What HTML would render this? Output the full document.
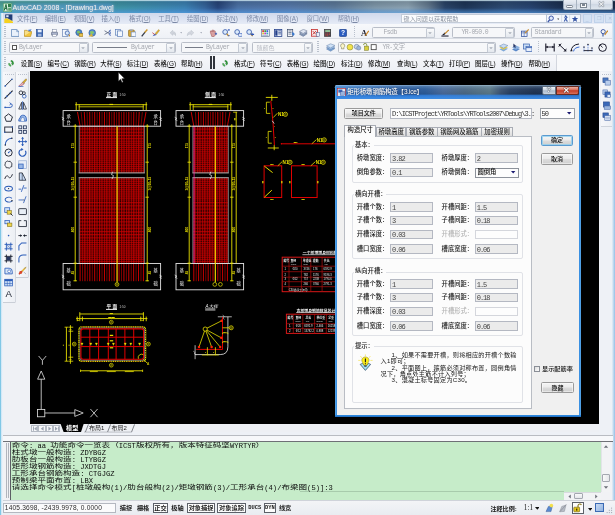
<!DOCTYPE html>
<html lang="zh-CN"><head><meta charset="utf-8"><title>AutoCAD 2008 - [Drawing1.dwg]</title>
<style>
html,body{margin:0;padding:0;background:#fff;}
#app{filter:blur(0.36px);position:relative;width:615px;height:515px;overflow:hidden;background:#eef1f6;font-family:"Liberation Sans","Noto Sans CJK SC",sans-serif;font-size:5.8px;}
#app div,#app span.t,#app svg{position:absolute;box-sizing:border-box;}
#app span.t{white-space:nowrap;display:block;}
#app u{text-decoration-thickness:0.6px;text-underline-offset:0.6px;}
.cb{background:#f6f7f9;border:1px solid #b9bec8;border-radius:1.5px;}
.fld{background:#ebebeb;border:1px solid #b4b4b4;}
.btn{background:linear-gradient(#f4f4f4,#e6e6e6 50%,#d4d4d4);border:1px solid #8e8e8e;border-radius:1.5px;}
.grp{border:1px solid #e0e2e7;border-radius:2px;}
#app span.cj{font-size:8.56px;line-height:8.56px;font-family:'Liberation Sans','Noto Sans CJK SC',sans-serif;transform:scaleY(0.70);transform-origin:0 0;color:#0c0c0c;}
#app span.la{font-size:7.133px;line-height:6.93px;font-family:'Liberation Mono',monospace;white-space:pre;color:#0a0a0a;}
</style></head><body>
<div id="app">
<!-- sec_chrome -->
<div style="left:0px;top:0px;width:615px;height:13.2px;background:linear-gradient(90deg,#4fa59c 0px,#46a096 60px,#3f93a6 120px,#3c82b4 185px,#35649a 205px,#27457a 218px,#4c72a6 238px,#5679aa 290px,#5c7a9a 335px,#7f98aa 375px,#8ba2b2 408px,#63798f 428px,#2a4468 445px,#1e3658 465px,#2e4c74 505px,#284470 530px,#1c3152 560px,#192b48 615px);"></div>
<div style="left:0px;top:0px;width:615px;height:13.2px;background:linear-gradient(180deg,rgba(205,228,236,.8) 0,rgba(205,228,236,.75) 0.9px,rgba(0,0,0,.14) 1.6px,rgba(0,0,0,.08) 5px,rgba(0,0,0,0) 8px,rgba(80,150,225,.4) 11px,rgba(90,165,235,.6) 13.2px);"></div>
<svg style="left:2.5px;top:2.5px" width="9" height="9" viewBox="0 0 9 9"><rect width="9" height="9" rx="1" fill="#3f8f5a"/><rect x="0.6" y="0.6" width="7.8" height="7.8" fill="#d8efe0"/><path d="M1.2 7.6 L3 1.4 L4.2 7.6 M1.8 5.4 H3.8" stroke="#1f6b3c" stroke-width="1" fill="none"/><rect x="5" y="1" width="3" height="3.2" fill="#2f7f4a"/><rect x="5.2" y="5" width="2.8" height="2.8" fill="#5aa070"/></svg>
<div style="left:13px;top:2.6px;width:100px;height:8.6px;background:rgba(86,146,222,.55);filter:blur(2.2px);border-radius:4px;"></div>
<span class="t" style="left:12.6px;top:3.5px;font-size:7px;line-height:7px;color:#f4f8fb;text-shadow:0 0 2px rgba(255,255,255,.75),0 0 1px rgba(30,60,90,.8);">AutoCAD 2008 - [Drawing1.dwg]</span>
<div style="left:562.5px;top:0px;width:50px;height:9.8px;background:linear-gradient(#e9eef4,#d9e0ea 45%,#cfd8e4 50%,#dfe6ee);border:1px solid #9aa8b8;border-top:none;border-radius:0 0 2.5px 2.5px;"></div>
<div style="left:576.4px;top:0px;width:1px;height:9.2px;background:#a8b4c2;"></div>
<div style="left:590.4px;top:0px;width:1px;height:9.2px;background:#a8b4c2;"></div>
<div style="left:566px;top:4.6px;width:7px;height:3px;border:0.8px solid #7c8692;border-radius:1.2px;background:#fafbfc;"></div>
<div style="left:580.4px;top:2.6px;width:6.6px;height:5px;border:0.8px solid #7c8692;background:#fafbfc;"></div>
<div style="left:582px;top:4.2px;width:3.4px;height:2px;border:0.6px solid #7c8692;"></div>
<span class="t" style="left:597.6px;top:0.9px;font-size:7.6px;line-height:7.6px;color:#f4f6f8;font-weight:bold;text-shadow:0 0 0.8px #5c6672,0 0 0.8px #5c6672,0 0 1px #5c6672;">✕</span>
<div style="left:0px;top:13.2px;width:615px;height:10.8px;background:linear-gradient(180deg,#d0d9ec,#dbe2f1 50%,#e6ebf6);"></div>
<svg style="left:3.6px;top:14.2px" width="9.4" height="9.4" viewBox="0 0 9.4 9.4"><path d="M1.2 0.4 H8.4 V7 H1.2 Z" fill="#213d78"/><path d="M2.2 1.2 H4.6 V3.2 H2.2Z" fill="#dfe7f5"/><path d="M0.3 9.1 V5 L3 4.3 L9 7.6 V9.1 Z" fill="#f5d11e"/><path d="M0.3 5 L3 4.3 L9 7.6" stroke="#fff3a0" stroke-width="0.5" fill="none"/></svg>
<span class="t" style="left:17px;top:15.8px;font-size:6.3px;line-height:6.3px;color:#7c89a6;">文件(<u>F</u>)</span>
<span class="t" style="left:44.8px;top:15.8px;font-size:6.3px;line-height:6.3px;color:#7c89a6;">编辑(<u>E</u>)</span>
<span class="t" style="left:73.7px;top:15.8px;font-size:6.3px;line-height:6.3px;color:#7c89a6;">视图(<u>V</u>)</span>
<span class="t" style="left:101.6px;top:15.8px;font-size:6.3px;line-height:6.3px;color:#7c89a6;">插入(<u>I</u>)</span>
<span class="t" style="left:129px;top:15.8px;font-size:6.3px;line-height:6.3px;color:#7c89a6;">格式(<u>O</u>)</span>
<span class="t" style="left:158.3px;top:15.8px;font-size:6.3px;line-height:6.3px;color:#7c89a6;">工具(<u>T</u>)</span>
<span class="t" style="left:187px;top:15.8px;font-size:6.3px;line-height:6.3px;color:#7c89a6;">绘图(<u>D</u>)</span>
<span class="t" style="left:216.4px;top:15.8px;font-size:6.3px;line-height:6.3px;color:#7c89a6;">标注(<u>N</u>)</span>
<span class="t" style="left:246.4px;top:15.8px;font-size:6.3px;line-height:6.3px;color:#7c89a6;">修改(<u>M</u>)</span>
<span class="t" style="left:277px;top:15.8px;font-size:6.3px;line-height:6.3px;color:#7c89a6;">图像(<u>A</u>)</span>
<span class="t" style="left:306.5px;top:15.8px;font-size:6.3px;line-height:6.3px;color:#7c89a6;">窗口(<u>W</u>)</span>
<span class="t" style="left:337.8px;top:15.8px;font-size:6.3px;line-height:6.3px;color:#7c89a6;">帮助(<u>H</u>)</span>
<div style="left:401px;top:14px;width:144.5px;height:8.8px;background:#fbfcfe;border:1px solid #c4ccd8;border-right:none;"></div>
<span class="t" style="left:403.6px;top:15.6px;font-size:6.1px;line-height:6.1px;color:#8c94a2;">键入问题以获取帮助</span>
<div style="left:545.5px;top:14px;width:35px;height:9.2px;background:#f4f7fc;border:1px solid #b8c4d6;"></div>
<svg style="left:546.5px;top:14.6px" width="33" height="8" viewBox="0 0 33 8"><circle cx="4.2" cy="3.2" r="2.2" fill="#dfe9fb" stroke="#3d57a8" stroke-width="1"/><path d="M2.6 5 L0.8 7" stroke="#3d57a8" stroke-width="1.3"/><path d="M10.2 3.6 h2 l-1 1.3z" fill="#333"/><path d="M14.6 0.3 V7.7 M22.6 0.3 V7.7" stroke="#c2ccdc" stroke-width="0.6"/><path d="M18.4 1 l1.6 1.4 l-1.2 1.6 l1.6 2.6 M17.4 2.4 l1.4 1.2 l-1.6 3" stroke="#3f5fae" stroke-width="1.1" fill="none"/><circle cx="18.6" cy="1.2" r="0.9" fill="#3f5fae"/><path d="M28 0.8 l0.9 2.2 l2.3 0.1 l-1.8 1.5 l0.7 2.3 l-2.1 -1.3 l-2.1 1.3 l0.7 -2.3 l-1.8 -1.5 l2.3 -0.1z" fill="#2f4fa2"/></svg>
<div style="left:582.7px;top:14.2px;width:9.8px;height:8.8px;background:#d3e1f3;border:1px solid #c0d2ea;"></div>
<div style="left:594px;top:14.2px;width:9.8px;height:8.8px;background:#d3e1f3;border:1px solid #c0d2ea;"></div>
<div style="left:605.2px;top:14.2px;width:9.8px;height:8.8px;background:#d3e1f3;border:1px solid #c0d2ea;"></div>
<span class="t" style="left:585.8px;top:16.6px;font-size:5px;line-height:5px;color:#aebfd8;">_</span>
<span class="t" style="left:596.8px;top:16px;font-size:5px;line-height:5px;color:#aebfd8;">❐</span>
<span class="t" style="left:607.6px;top:16px;font-size:5px;line-height:5px;color:#aebfd8;">✕</span>
<!-- sec_tool -->
<div style="left:0px;top:24px;width:615px;height:14.6px;background:linear-gradient(#f7f8fb,#eef1f6);"></div>
<div style="left:0px;top:38.4px;width:615px;height:0.8px;background:#d9dde4;"></div>
<div style="left:0px;top:39.2px;width:615px;height:15.2px;background:linear-gradient(#f6f7fa,#eef1f6);"></div>
<div style="left:0px;top:54.2px;width:615px;height:0.8px;background:#d9dde4;"></div>
<div style="left:0px;top:55px;width:615px;height:15.8px;background:linear-gradient(#f7f8fb,#edf0f5);"></div>
<div style="left:4.4px;top:26px;width:1.6px;height:11px;background:repeating-linear-gradient(180deg,#b9c0cc 0 1px,transparent 1px 2px);"></div>
<div style="left:4.4px;top:41px;width:1.6px;height:12px;background:repeating-linear-gradient(180deg,#b9c0cc 0 1px,transparent 1px 2px);"></div>
<div style="left:4.4px;top:57px;width:1.6px;height:12px;background:repeating-linear-gradient(180deg,#b9c0cc 0 1px,transparent 1px 2px);"></div>
<div style="left:353.6px;top:26px;width:1.6px;height:11px;background:repeating-linear-gradient(180deg,#b9c0cc 0 1px,transparent 1px 2px);"></div>
<div style="left:317px;top:41px;width:1.6px;height:12px;background:repeating-linear-gradient(180deg,#b9c0cc 0 1px,transparent 1px 2px);"></div>
<div style="left:537.5px;top:41px;width:1.6px;height:12px;background:repeating-linear-gradient(180deg,#b9c0cc 0 1px,transparent 1px 2px);"></div>
<svg style="left:10.57px;top:29.04px" width="8.36" height="7.92" viewBox="0 0 9.5 9"><path d="M0.5 0.5 H6.5 L9 3 V8.5 H0.5Z" fill="#e9f1fb" stroke="#5f86b8" stroke-width="0.9"/><path d="M6.5 0.5 V3 H9" fill="none" stroke="#5f86b8" stroke-width="0.7"/></svg>
<svg style="left:23.57px;top:29.04px" width="8.36" height="7.92" viewBox="0 0 9.5 9"><path d="M0.5 8.5 L2 3 H9 L7.5 8.5Z" fill="#f3c63a" stroke="#b58a1a" stroke-width="0.7"/><path d="M0.5 8 V1.5 H3.5 L4.5 2.6 H7.5 V3" fill="#f8df8a" stroke="#b58a1a" stroke-width="0.7"/><path d="M4 1 L8.6 0.4 L7 3.2" fill="#4f7fd0"/></svg>
<svg style="left:35.5px;top:29.04px" width="7.39" height="7.92" viewBox="0 0 8.4 9"><rect x="0.5" y="0.5" width="7.4" height="8" fill="#3b67b4" stroke="#274a8a" stroke-width="0.7"/><rect x="2" y="0.8" width="4.4" height="3" fill="#e6eefa"/><rect x="2.2" y="5.4" width="4" height="3" fill="#9fb6de"/></svg>
<svg style="left:51.28px;top:29.04px" width="7.04" height="7.92" viewBox="0 0 8 9"><rect x="1.6" y="0.6" width="4.6" height="3.4" fill="#fff" stroke="#7b86a0" stroke-width="0.6"/><rect x="0.5" y="3.6" width="7" height="3.6" rx="0.8" fill="#aab4cc" stroke="#55607a" stroke-width="0.7"/><rect x="1.8" y="6" width="4.4" height="2.6" fill="#fff" stroke="#7b86a0" stroke-width="0.6"/></svg>
<svg style="left:61.6px;top:29.04px" width="8.8" height="7.92" viewBox="0 0 10 9"><rect x="0.5" y="0.5" width="6.4" height="8" fill="#f2f6fc" stroke="#6a84b4" stroke-width="0.8"/><circle cx="6" cy="4.6" r="2.4" fill="#d5e6fb" stroke="#3c5fa8" stroke-width="0.9"/><path d="M7.8 6.4 L9.6 8.6" stroke="#c08a2a" stroke-width="1.3"/></svg>
<svg style="left:74.56px;top:29.04px" width="8.27" height="7.92" viewBox="0 0 9.4 9"><circle cx="4.4" cy="4" r="3.5" fill="#4e86c8" stroke="#2c5a9a" stroke-width="0.7"/><path d="M2 3 q2 -2 4 0 q-1 3 -3 2z" fill="#7cc06a"/><rect x="4.6" y="5" width="4.4" height="3.6" fill="#e8c24a" stroke="#8a6a1a" stroke-width="0.6"/></svg>
<svg style="left:87.56px;top:29.04px" width="8.27" height="7.92" viewBox="0 0 9.4 9"><circle cx="4.8" cy="4.4" r="3.8" fill="#5a8fd0" stroke="#2c5a9a" stroke-width="0.7"/><path d="M2 3.4 q2.6 -2.4 5 0.4 q-1.4 3 -3.6 2.4z" fill="#86c86a"/><path d="M0.6 8.4 L4 5.2 L6 8.6Z" fill="#d9b23a"/></svg>
<svg style="left:103.53px;top:29.04px" width="7.74" height="7.92" viewBox="0 0 8.8 9"><path d="M0.6 2 L6.4 5.4 M0.6 6.2 L6.4 3" stroke="#555f78" stroke-width="0.9" fill="none"/><circle cx="7.2" cy="2.6" r="1.2" fill="none" stroke="#3a5db0" stroke-width="0.9"/><circle cx="7.2" cy="6" r="1.2" fill="none" stroke="#3a5db0" stroke-width="0.9"/></svg>
<svg style="left:115.15px;top:29.04px" width="8.1" height="7.92" viewBox="0 0 9.2 9"><rect x="0.5" y="0.6" width="5.6" height="6.4" fill="#eef4fc" stroke="#5f80b8" stroke-width="0.8"/><rect x="3" y="2.2" width="5.6" height="6.4" fill="#f4f8fe" stroke="#5f80b8" stroke-width="0.8"/></svg>
<svg style="left:127.58px;top:29.04px" width="8.45" height="7.92" viewBox="0 0 9.6 9"><rect x="0.6" y="1.2" width="6.6" height="7.2" rx="0.8" fill="#d9a93a" stroke="#8a6a1a" stroke-width="0.7"/><rect x="2.4" y="0.4" width="3" height="1.8" fill="#9aa6be"/><rect x="3.6" y="3.4" width="5.4" height="5.2" fill="#f4f8fe" stroke="#5f80b8" stroke-width="0.7"/></svg>
<svg style="left:141.08px;top:29.04px" width="7.04" height="7.92" viewBox="0 0 8 9"><path d="M0.8 8.4 L4.6 3.6" stroke="#333a4a" stroke-width="1.5"/><path d="M4.2 4 L7.2 0.6" stroke="#c9952a" stroke-width="1.6"/></svg>
<svg style="left:151.93px;top:29.04px" width="7.74" height="7.92" viewBox="0 0 8.8 9"><path d="M0.6 8.2 L3.4 5.2 L5 6.8 Z" fill="#3a62c0"/><path d="M3.6 5 L7.6 0.6 L8.6 1.8 L5 6.4Z" fill="#e1b02e" stroke="#8a6a1a" stroke-width="0.4"/><path d="M0.4 4 L3 6.6" stroke="#c43a3a" stroke-width="1"/></svg>
<svg style="left:168.54px;top:29.04px" width="7.92" height="7.92" viewBox="0 0 9 9"><path d="M1.2 4.4 L4.2 1.4 V3 Q8 3 8 7.6 Q6.6 5.4 4.2 5.6 V7.2Z" fill="#d0d4dc" stroke="#b4b9c4" stroke-width="0.5"/></svg>
<svg style="left:179.78px;top:32.22px" width="2.64" height="1.76" viewBox="0 0 3 2"><path d="M0 0 H3 L1.5 1.8Z" fill="#b0b5c0"/></svg>
<svg style="left:186.2px;top:29.04px" width="8.8" height="7.92" viewBox="0 0 10 9"><path d="M8.8 4.4 L5.8 1.4 V3 Q1.4 3 1.4 7.6 Q3 5.4 5.8 5.6 V7.2Z" fill="#d4d8e0" stroke="#b4b9c4" stroke-width="0.5"/></svg>
<svg style="left:199.78px;top:32.22px" width="2.64" height="1.76" viewBox="0 0 3 2"><path d="M0 0 H3 L1.5 1.8Z" fill="#b0b5c0"/></svg>
<svg style="left:209.18px;top:29.04px" width="8.45" height="7.92" viewBox="0 0 9.6 9"><path d="M1.6 4 Q1 1.4 3 2 L3.6 3.4 L4.2 1 Q5.4 0.6 5.4 3.2 L6.4 1.8 Q7.6 2 7 4.4 Q8.6 4.4 7.8 6.2 L5.8 8.6 H3.2 Z" fill="#d9a0a0" stroke="#9a4a4a" stroke-width="0.6"/><path d="M6.6 5.4 h2.6 M7.9 4.1 v2.6" stroke="#2f57b8" stroke-width="0.9"/></svg>
<svg style="left:222.18px;top:29.04px" width="8.45" height="7.92" viewBox="0 0 9.6 9"><circle cx="3.6" cy="3.4" r="2.7" fill="#dcebfb" stroke="#3d5fae" stroke-width="1"/><path d="M5.4 5.4 L7.6 8" stroke="#c08a2a" stroke-width="1.4"/><path d="M6.6 1 h2.4 M7.8 -0.2 v2.4 M6.6 7.6 h2.4" stroke="#2f57b8" stroke-width="0.8"/></svg>
<svg style="left:233.58px;top:29.04px" width="8.45" height="7.92" viewBox="0 0 9.6 9"><circle cx="3.6" cy="3.4" r="2.7" fill="#dcebfb" stroke="#3d5fae" stroke-width="1"/><path d="M5.4 5.4 L7.6 8" stroke="#c08a2a" stroke-width="1.4"/><rect x="5.4" y="5" width="3.8" height="3.4" fill="#dbe7fb" stroke="#2f57b8" stroke-width="0.6"/></svg>
<svg style="left:246.38px;top:29.04px" width="8.45" height="7.92" viewBox="0 0 9.6 9"><circle cx="3.6" cy="3.4" r="2.7" fill="#dcebfb" stroke="#3d5fae" stroke-width="1"/><path d="M5.4 5.4 L7.6 8" stroke="#c08a2a" stroke-width="1.4"/><path d="M5 6 l2.4 -1.8 v1.2 h1.8 v1.4 h-1.8 v1.2z" fill="#2f57b8"/></svg>
<svg style="left:261.32px;top:29.04px" width="9.06" height="7.92" viewBox="0 0 10.3 9"><rect x="0.5" y="0.5" width="9.3" height="8" fill="#f4f6fa" stroke="#5a6a8a" stroke-width="0.7"/><rect x="1.4" y="1.4" width="2" height="2" fill="#d83a3a"/><rect x="3.8" y="1.4" width="2" height="2" fill="#3aa03a"/><rect x="6.2" y="1.4" width="2" height="2" fill="#3a5ad8"/><rect x="1.4" y="4" width="2" height="2" fill="#e0c030"/><rect x="3.8" y="4" width="2" height="2" fill="#c040c0"/><rect x="6.2" y="4" width="2" height="2" fill="#30b0c0"/><path d="M1.4 7.2 H8.4" stroke="#8090b0" stroke-width="0.8"/></svg>
<svg style="left:274.26px;top:29.04px" width="8.27" height="7.92" viewBox="0 0 9.4 9"><rect x="0.5" y="0.5" width="8.4" height="8" fill="#e8eef8" stroke="#24408a" stroke-width="0.9"/><rect x="1.4" y="1.4" width="2.6" height="6.2" fill="#24408a"/><path d="M4.8 2 H8 M4.8 3.8 H8 M4.8 5.6 H8" stroke="#24408a" stroke-width="0.8"/></svg>
<svg style="left:287.25px;top:29.04px" width="8.1" height="7.92" viewBox="0 0 9.2 9"><rect x="0.5" y="0.5" width="6" height="8" fill="#f4f6fa" stroke="#3a4a6a" stroke-width="0.8"/><path d="M1.6 2.2 H5.2 M1.6 4 H5.2 M1.6 5.8 H5.2" stroke="#3a4a6a" stroke-width="0.7"/><path d="M6.4 3 L8.8 5.6 L7.4 8 L5.6 5.6Z" fill="#3a7ad0"/></svg>
<svg style="left:298.99px;top:29.04px" width="8.62" height="7.92" viewBox="0 0 9.8 9"><path d="M0.5 6 L5 3.4 L9.3 5.4 L4.8 8.4Z" fill="#8fa4c4" stroke="#4a5a7a" stroke-width="0.5"/><path d="M0.5 4.4 L5 1.8 L9.3 3.8 L4.8 6.8Z" fill="#b4c4dc" stroke="#4a5a7a" stroke-width="0.5"/><path d="M0.5 2.8 L5 0.4 L9.3 2.2 L4.8 5.2Z" fill="#dfe6f2" stroke="#4a5a7a" stroke-width="0.5"/></svg>
<svg style="left:310.62px;top:29.04px" width="9.06" height="7.92" viewBox="0 0 10.3 9"><rect x="0.5" y="0.6" width="7" height="7.6" fill="#f6e8e8" stroke="#c42a2a" stroke-width="0.9"/><path d="M2 2.4 L5.6 6.2 M5.6 2.4 L2 6.2" stroke="#c42a2a" stroke-width="1"/><rect x="6.4" y="4.2" width="3.4" height="4.2" fill="#e8eef8" stroke="#4a5a8a" stroke-width="0.6"/></svg>
<svg style="left:323.9px;top:29.04px" width="7.39" height="7.92" viewBox="0 0 8.4 9"><rect x="0.5" y="0.5" width="7.4" height="8" fill="#4a4a50" stroke="#222" stroke-width="0.6"/><rect x="1.4" y="1.3" width="5.6" height="2" fill="#9ad0a0"/><path d="M1.6 4.6 h1.2 M3.6 4.6 h1.2 M5.6 4.6 h1.2 M1.6 6.2 h1.2 M3.6 6.2 h1.2 M5.6 6.2 h1.2 M1.6 7.6 h1.2 M3.6 7.6 h1.2" stroke="#d04040" stroke-width="0.9"/></svg>
<svg style="left:339.04px;top:29.04px" width="7.92" height="7.92" viewBox="0 0 9 9"><rect x="0.4" y="0.4" width="8.2" height="8.2" rx="1.2" fill="#2a5cc0" stroke="#16387e" stroke-width="0.7"/><text x="4.5" y="7.2" font-family="Liberation Sans,sans-serif" font-weight="bold" font-size="7.6" fill="#fff" text-anchor="middle">?</text></svg>
<svg style="left:360.96px;top:29.04px" width="8.27" height="7.92" viewBox="0 0 9.4 9"><text x="0" y="8" font-family="Liberation Serif,serif" font-weight="bold" font-size="9.4" fill="#1a1a2a">A</text><path d="M5 7.6 L8.8 2" stroke="#d08a2a" stroke-width="1.3"/></svg>
<div class="cb" style="left:371.6px;top:27.3px;width:63.8px;height:11.2px;background:#f6f7f9;"></div>
<div style="left:425.8px;top:28.1px;width:8.8px;height:9.6px;background:linear-gradient(#fafbfc,#e4e8ee);border:1px solid #c4cad4;border-radius:1px;"></div>
<svg style="left:428.2px;top:31.9px" width="4" height="2.4" viewBox="0 0 4 2.4"><path d="M0.2 0.2 H3.8 L2 2.2Z" fill="#a8aeb8"/></svg>
<span class="t" style="left:383.4px;top:30px;font-size:6.5px;line-height:6.5px;color:#a6a9b0;font-family:'Liberation Mono',monospace;letter-spacing:-0.55px;">Fsdb</span>
<svg style="left:441.16px;top:29.04px" width="8.27" height="7.92" viewBox="0 0 9.4 9"><path d="M0.4 8 H8.6" stroke="#1a1a2a" stroke-width="1.2"/><path d="M1 7 L5 3.4 L4 6.8Z" fill="#1a1a2a"/><path d="M4.4 5.6 L8.8 1" stroke="#c88a2a" stroke-width="1.3"/></svg>
<div class="cb" style="left:452px;top:27.3px;width:63px;height:11.2px;background:#f6f7f9;"></div>
<div style="left:505.4px;top:28.1px;width:8.8px;height:9.6px;background:linear-gradient(#fafbfc,#e4e8ee);border:1px solid #c4cad4;border-radius:1px;"></div>
<svg style="left:507.8px;top:31.9px" width="4" height="2.4" viewBox="0 0 4 2.4"><path d="M0.2 0.2 H3.8 L2 2.2Z" fill="#a8aeb8"/></svg>
<span class="t" style="left:461.4px;top:30px;font-size:6.5px;line-height:6.5px;color:#a6a9b0;font-family:'Liberation Mono',monospace;letter-spacing:-0.55px;">YR-050.0</span>
<svg style="left:520.56px;top:29.04px" width="8.27" height="7.92" viewBox="0 0 9.4 9"><rect x="0.5" y="2.4" width="6.4" height="6" fill="#eaf0fa" stroke="#2a4a9a" stroke-width="0.8"/><path d="M0.5 4.4 H7 M3.6 2.4 V8.4" stroke="#2a4a9a" stroke-width="0.6"/><path d="M4.6 4.8 L8.8 0.6" stroke="#c88a2a" stroke-width="1.3"/></svg>
<div class="cb" style="left:531px;top:27.3px;width:63.3px;height:11.2px;background:#f6f7f9;"></div>
<div style="left:584.7px;top:28.1px;width:8.8px;height:9.6px;background:linear-gradient(#fafbfc,#e4e8ee);border:1px solid #c4cad4;border-radius:1px;"></div>
<svg style="left:587.1px;top:31.9px" width="4" height="2.4" viewBox="0 0 4 2.4"><path d="M0.2 0.2 H3.8 L2 2.2Z" fill="#a8aeb8"/></svg>
<span class="t" style="left:534.4px;top:30px;font-size:6.5px;line-height:6.5px;color:#a6a9b0;font-family:'Liberation Mono',monospace;letter-spacing:-0.55px;">Standard</span>
<svg style="left:600.06px;top:29.04px" width="8.27" height="7.92" viewBox="0 0 9.4 9"><circle cx="3.6" cy="3" r="2.4" fill="none" stroke="#2a4a9a" stroke-width="1"/><path d="M3.4 5.4 V8.6" stroke="#2a4a9a" stroke-width="1.2"/><path d="M5.4 6.6 L8.8 1.8" stroke="#c88a2a" stroke-width="1.3"/></svg>
<div class="cb" style="left:8.5px;top:41.7px;width:80.1px;height:11.6px;background:#f6f7f9;"></div>
<div style="left:79px;top:42.5px;width:8.8px;height:10px;background:linear-gradient(#fafbfc,#e4e8ee);border:1px solid #c4cad4;border-radius:1px;"></div>
<svg style="left:81.4px;top:46.5px" width="4" height="2.4" viewBox="0 0 4 2.4"><path d="M0.2 0.2 H3.8 L2 2.2Z" fill="#a8aeb8"/></svg>
<div style="left:11.6px;top:44.6px;width:5px;height:5px;border:1px solid #555;background:#fff;"></div>
<span class="t" style="left:19px;top:44.6px;font-size:6.5px;line-height:6.5px;color:#a6a9b0;font-family:'Liberation Mono',monospace;letter-spacing:-0.55px;">ByLayer</span>
<div class="cb" style="left:92.4px;top:41.7px;width:83.6px;height:11.6px;background:#f6f7f9;"></div>
<div style="left:166.4px;top:42.5px;width:8.8px;height:10px;background:linear-gradient(#fafbfc,#e4e8ee);border:1px solid #c4cad4;border-radius:1px;"></div>
<svg style="left:168.8px;top:46.5px" width="4" height="2.4" viewBox="0 0 4 2.4"><path d="M0.2 0.2 H3.8 L2 2.2Z" fill="#a8aeb8"/></svg>
<div style="left:97.4px;top:47.2px;width:30px;height:0.9px;background:#777c88;"></div>
<span class="t" style="left:131px;top:44.6px;font-size:6.5px;line-height:6.5px;color:#a6a9b0;font-family:'Liberation Mono',monospace;letter-spacing:-0.55px;">ByLayer</span>
<div class="cb" style="left:181.2px;top:41.7px;width:66.5px;height:11.6px;background:#f6f7f9;"></div>
<div style="left:238.1px;top:42.5px;width:8.8px;height:10px;background:linear-gradient(#fafbfc,#e4e8ee);border:1px solid #c4cad4;border-radius:1px;"></div>
<svg style="left:240.5px;top:46.5px" width="4" height="2.4" viewBox="0 0 4 2.4"><path d="M0.2 0.2 H3.8 L2 2.2Z" fill="#a8aeb8"/></svg>
<div style="left:185px;top:47.2px;width:18px;height:0.9px;background:#777c88;"></div>
<span class="t" style="left:206px;top:44.6px;font-size:6.5px;line-height:6.5px;color:#a6a9b0;font-family:'Liberation Mono',monospace;letter-spacing:-0.55px;">ByLayer</span>
<div class="cb" style="left:251.6px;top:41.7px;width:61.6px;height:11.6px;background:#f6f7f9;"></div>
<div style="left:303.6px;top:42.5px;width:8.8px;height:10px;background:linear-gradient(#fafbfc,#e4e8ee);border:1px solid #c4cad4;border-radius:1px;"></div>
<svg style="left:306px;top:46.5px" width="4" height="2.4" viewBox="0 0 4 2.4"><path d="M0.2 0.2 H3.8 L2 2.2Z" fill="#a8aeb8"/></svg>
<span class="t" style="left:256.4px;top:44.6px;font-size:6px;line-height:6px;color:#b9bcc4;">随颜色</span>
<svg style="left:326px;top:43.3px" width="9.4" height="9" viewBox="0 0 9.4 9"><path d="M0.5 6 L4.6 4 L8.9 5.6 L4.6 8.2Z" fill="#7fa8d8" stroke="#4a6a9a" stroke-width="0.4"/><path d="M0.5 4.4 L4.6 2.4 L8.9 4 L4.6 6.6Z" fill="#a4c4e8" stroke="#4a6a9a" stroke-width="0.4"/><path d="M0.5 2.8 L4.6 0.8 L8.9 2.4 L4.6 5Z" fill="#d0e2f6" stroke="#4a6a9a" stroke-width="0.4"/></svg>
<div class="cb" style="left:337.8px;top:41.7px;width:158.4px;height:11.6px;background:#f6f7f9;"></div>
<div style="left:486.6px;top:42.5px;width:8.8px;height:10px;background:linear-gradient(#fafbfc,#e4e8ee);border:1px solid #c4cad4;border-radius:1px;"></div>
<svg style="left:489px;top:46.5px" width="4" height="2.4" viewBox="0 0 4 2.4"><path d="M0.2 0.2 H3.8 L2 2.2Z" fill="#a8aeb8"/></svg>
<svg style="left:340.2px;top:43.33px" width="41.6" height="8.74" viewBox="0 0 40 8.4"><path d="M2.6 0.6 a2 2 0 0 1 1.2 3.6 v1.4 h-2.4 v-1.4 a2 2 0 0 1 1.2 -3.6z" fill="#fbf6c8" stroke="#6a6a4a" stroke-width="0.5"/><circle cx="9.6" cy="4" r="2.8" fill="#f2e24a" stroke="#8a8a3a" stroke-width="0.6"/><circle cx="16" cy="3.6" r="2.3" fill="#c4d4e8" stroke="#6a7a9a" stroke-width="0.6"/><circle cx="18" cy="4.8" r="2" fill="#9ab4d8" stroke="#6a7a9a" stroke-width="0.5"/><path d="M22.6 2 a1.6 1.6 0 0 1 3.2 0 v1.6" fill="none" stroke="#8a9a4a" stroke-width="0.9"/><rect x="23.6" y="3" width="4" height="4" fill="#d8d040" stroke="#7a7a2a" stroke-width="0.5"/><rect x="30" y="1.6" width="4.8" height="4.8" fill="#fff" stroke="#444" stroke-width="0.8"/></svg>
<span class="t" style="left:382.6px;top:44.5px;font-size:6.3px;line-height:6.3px;color:#a6a9b0;font-family:'Liberation Mono','Noto Sans CJK SC',monospace;letter-spacing:-0.4px;">YR-文字</span>
<svg style="left:499px;top:43.3px" width="9.4" height="9" viewBox="0 0 9.4 9"><path d="M0.5 6.2 L4.6 4.2 L8.9 5.8 L4.6 8.4Z" fill="#7fa8d8"/><path d="M0.5 4.6 L4.6 2.6 L8.9 4.2 L4.6 6.8Z" fill="#e8d04a"/><path d="M0.5 3 L4.6 1 L8.9 2.6 L4.6 5.2Z" fill="#c8dcf4" stroke="#4a6a9a" stroke-width="0.4"/></svg>
<svg style="left:511px;top:43.3px" width="9.4" height="9" viewBox="0 0 9.4 9"><path d="M1 6.4 L5 4.4 L9 6 L5 8.6Z" fill="#5a88c8"/><path d="M1 4.6 L5 2.6 L9 4.2 L5 6.8Z" fill="#8ab0e0"/><path d="M2.4 0.6 l3 2.6 l-1.4 0.2 l0.8 1.6 l-0.8 0.3 l-0.8 -1.6 l-0.9 0.9z" fill="#2a3a6a"/></svg>
<svg style="left:523px;top:43.3px" width="9.4" height="9" viewBox="0 0 9.4 9"><rect x="0.6" y="1" width="6" height="5" fill="#c8dcf4" stroke="#3a62b0" stroke-width="0.7"/><rect x="3" y="3.4" width="6" height="5" fill="#e8f0fc" stroke="#3a62b0" stroke-width="0.7"/><path d="M3 4.6 H9" stroke="#3a62b0" stroke-width="0.9"/></svg>
<svg style="left:545px;top:43.3px" width="10" height="9" viewBox="0 0 10 9"><path d="M0.8 0.6 V8.4 M9.2 0.6 V8.4" stroke="#1a1a2a" stroke-width="1.1"/><path d="M0.8 4 H9.2" stroke="#1a1a2a" stroke-width="0.9"/><path d="M0.8 4 l2 -1.2 v2.4z M9.2 4 l-2 -1.2 v2.4z" fill="#1a1a2a"/></svg>
<svg style="left:558px;top:43.3px" width="9.4" height="9" viewBox="0 0 9.4 9"><path d="M1 1.4 L8 8" stroke="#1a1a2a" stroke-width="1"/><path d="M0.6 1 l2.6 0.4 l-1.8 2z M8.6 8.6 l-2.6 -0.4 l1.8 -2z" fill="#1a1a2a"/><path d="M0.6 3.6 L3.2 0.6 M6 8.6 L8.8 5.6" stroke="#1a1a2a" stroke-width="0.8"/></svg>
<svg style="left:569.6px;top:43.3px" width="10.4" height="9" viewBox="0 0 10.4 9"><path d="M1 8.4 Q1.6 1.6 9 1" fill="none" stroke="#1a1a2a" stroke-width="1"/><path d="M3.6 8.4 Q4 4.6 9.4 4" fill="none" stroke="#3a6ad0" stroke-width="1"/><path d="M0.4 8 l1.4 -2 l0.8 2.2z" fill="#1a1a2a"/></svg>
<svg style="left:582.6px;top:43.3px" width="10.4" height="9" viewBox="0 0 10.4 9"><path d="M1 8.4 V3.4 M5 8.4 V1 M9 8.4 V4.6" stroke="#3a6ad0" stroke-width="0.8" stroke-dasharray="1 0.8"/><path d="M0.6 7.6 H9.6" stroke="#1a1a2a" stroke-width="0.9"/><path d="M1 3 l1 1.6 h-2z M5 0.4 l1 1.6 h-2z M9 4 l1 1.6 h-2z" fill="#1a1a2a"/></svg>
<svg style="left:598px;top:43.3px" width="9.4" height="9" viewBox="0 0 9.4 9"><circle cx="4.6" cy="4.6" r="3.8" fill="none" stroke="#1a1a2a" stroke-width="1"/><path d="M4.6 4.6 L2.2 2" stroke="#1a1a2a" stroke-width="0.9"/></svg>
<div style="left:556px;top:55px;width:56.4px;height:15.8px;background:#f8f9fb;border-left:1px solid #d2d6de;"></div>
<svg style="left:8.22px;top:60.36px" width="6.16" height="6.69" viewBox="0 0 7 7.6"><path d="M3.4 0.4 Q6.6 0.8 6.4 4 L6.8 4 L5.2 6 L3.8 3.8 L4.8 3.9 Q4.8 2 3.2 1.8Z" fill="#2f9a3a" stroke="#1a6a24" stroke-width="0.3"/><path d="M3.2 7.4 Q0.2 6.8 0.6 3.8 L2.2 4 Q2 5.4 3.6 5.8Z" fill="#58b860" stroke="#1a6a24" stroke-width="0.3"/></svg>
<svg style="left:221.82px;top:60.36px" width="6.16" height="6.69" viewBox="0 0 7 7.6"><path d="M3.4 0.4 Q6.6 0.8 6.4 4 L6.8 4 L5.2 6 L3.8 3.8 L4.8 3.9 Q4.8 2 3.2 1.8Z" fill="#2f9a3a" stroke="#1a6a24" stroke-width="0.3"/><path d="M3.2 7.4 Q0.2 6.8 0.6 3.8 L2.2 4 Q2 5.4 3.6 5.8Z" fill="#58b860" stroke="#1a6a24" stroke-width="0.3"/></svg>
<div style="left:210.4px;top:56.4px;width:1.4px;height:13px;background:#30343c;"></div>
<div style="left:213.2px;top:56.4px;width:1.4px;height:13px;background:#30343c;"></div>
<span class="t" style="left:20.8px;top:61.3px;font-size:6.4px;line-height:6.4px;color:#101010;font-weight:500;">设置(<u>S</u>)</span>
<span class="t" style="left:47.4px;top:61.3px;font-size:6.4px;line-height:6.4px;color:#101010;font-weight:500;">编号(<u>C</u>)</span>
<span class="t" style="left:74.2px;top:61.3px;font-size:6.4px;line-height:6.4px;color:#101010;font-weight:500;">钢筋(<u>R</u>)</span>
<span class="t" style="left:100.3px;top:61.3px;font-size:6.4px;line-height:6.4px;color:#101010;font-weight:500;">大样(<u>S</u>)</span>
<span class="t" style="left:126.8px;top:61.3px;font-size:6.4px;line-height:6.4px;color:#101010;font-weight:500;">标注(<u>D</u>)</span>
<span class="t" style="left:154px;top:61.3px;font-size:6.4px;line-height:6.4px;color:#101010;font-weight:500;">表格(<u>G</u>)</span>
<span class="t" style="left:181px;top:61.3px;font-size:6.4px;line-height:6.4px;color:#101010;font-weight:500;">帮助(<u>H</u>)</span>
<span class="t" style="left:233.9px;top:61.3px;font-size:6.4px;line-height:6.4px;color:#101010;font-weight:500;">格式(<u>F</u>)</span>
<span class="t" style="left:260px;top:61.3px;font-size:6.4px;line-height:6.4px;color:#101010;font-weight:500;">符号(<u>C</u>)</span>
<span class="t" style="left:286.7px;top:61.3px;font-size:6.4px;line-height:6.4px;color:#101010;font-weight:500;">表格(<u>G</u>)</span>
<span class="t" style="left:313.5px;top:61.3px;font-size:6.4px;line-height:6.4px;color:#101010;font-weight:500;">绘图(<u>D</u>)</span>
<span class="t" style="left:341px;top:61.3px;font-size:6.4px;line-height:6.4px;color:#101010;font-weight:500;">标注(<u>D</u>)</span>
<span class="t" style="left:368px;top:61.3px;font-size:6.4px;line-height:6.4px;color:#101010;font-weight:500;">修改(<u>M</u>)</span>
<span class="t" style="left:397px;top:61.3px;font-size:6.4px;line-height:6.4px;color:#101010;font-weight:500;">查询(<u>L</u>)</span>
<span class="t" style="left:423px;top:61.3px;font-size:6.4px;line-height:6.4px;color:#101010;font-weight:500;">文本(<u>T</u>)</span>
<span class="t" style="left:449px;top:61.3px;font-size:6.4px;line-height:6.4px;color:#101010;font-weight:500;">打印(<u>P</u>)</span>
<span class="t" style="left:475px;top:61.3px;font-size:6.4px;line-height:6.4px;color:#101010;font-weight:500;">图层(<u>L</u>)</span>
<span class="t" style="left:501px;top:61.3px;font-size:6.4px;line-height:6.4px;color:#101010;font-weight:500;">操作(<u>D</u>)</span>
<span class="t" style="left:528.4px;top:61.3px;font-size:6.4px;line-height:6.4px;color:#101010;font-weight:500;">帮助(<u>H</u>)</span>
<!-- sec_side -->
<div style="left:0px;top:13.2px;width:3px;height:502px;background:linear-gradient(90deg,#6cbfe0 0,#9ad2ec 1.1px,#e2eef8 1.6px,#ecf2f9 3px);"></div>
<div style="left:612.4px;top:13.2px;width:2.6px;height:502px;background:linear-gradient(90deg,#e6eef7 0,#c6dcf0 1.2px,#9ec6e8 2.6px);"></div>
<div style="left:3px;top:70.8px;width:27.2px;height:364px;background:#eff1f5;"></div>
<div style="left:3px;top:72.2px;width:12.6px;height:230.4px;background:linear-gradient(90deg,#f7f8fb,#eceff4);border-right:1px solid #d3d7de;border-bottom:1px solid #c9ced6;border-radius:0 0 1.5px 0;"></div>
<div style="left:16.4px;top:72.2px;width:13px;height:205.4px;background:linear-gradient(90deg,#f7f8fb,#eceff4);border-right:1px solid #d3d7de;border-bottom:1px solid #c9ced6;border-radius:0 0 1.5px 0;"></div>
<div style="left:4.6px;top:73.6px;width:9px;height:1.4px;background:repeating-linear-gradient(90deg,#b9c0cc 0 1px,transparent 1px 2px);"></div>
<div style="left:17.6px;top:73.6px;width:9px;height:1.4px;background:repeating-linear-gradient(90deg,#b9c0cc 0 1px,transparent 1px 2px);"></div>
<svg style="left:4px;top:77.8px" width="9.2" height="9.2" viewBox="0 0 10 10"><path d="M1 9 L9 1" stroke="#1c2230" stroke-width="1"/><circle cx="1.4" cy="8.6" r="0.9" fill="#2a5cb8"/><circle cx="8.6" cy="1.4" r="0.9" fill="#2a5cb8"/></svg>
<svg style="left:4px;top:89.56px" width="9.2" height="9.2" viewBox="0 0 10 10"><path d="M0.6 9.4 L9.4 0.6" stroke="#1c2230" stroke-width="1.1"/><circle cx="3" cy="7" r="0.9" fill="#2a5cb8"/><circle cx="7" cy="3" r="0.9" fill="#2a5cb8"/></svg>
<svg style="left:4px;top:101.32px" width="9.2" height="9.2" viewBox="0 0 10 10"><path d="M1 7 H6.6 Q9 7 9 4.8 Q9 2.8 6.8 3" fill="none" stroke="#2a5cb8" stroke-width="1"/><circle cx="1.2" cy="7" r="0.9" fill="#2a5cb8"/><path d="M6 1.6 L7.6 3 L6 4.4" fill="none" stroke="#2a5cb8" stroke-width="0.8"/></svg>
<svg style="left:4px;top:113.08px" width="9.2" height="9.2" viewBox="0 0 10 10"><path d="M5 1 L9.2 4.2 L7.6 9 H2.4 L0.8 4.2Z" fill="none" stroke="#1c2230" stroke-width="1"/></svg>
<svg style="left:4px;top:124.84px" width="9.2" height="9.2" viewBox="0 0 10 10"><rect x="0.8" y="2.2" width="8.4" height="5.6" fill="none" stroke="#1c2230" stroke-width="1"/><circle cx="0.9" cy="7.8" r="0.8" fill="#2a5cb8"/><circle cx="9.1" cy="2.2" r="0.8" fill="#2a5cb8"/></svg>
<svg style="left:4px;top:136.6px" width="9.2" height="9.2" viewBox="0 0 10 10"><path d="M1.4 9 Q1.4 2 8.6 1.4" fill="none" stroke="#2a5cb8" stroke-width="1.1"/><circle cx="1.4" cy="8.8" r="0.8" fill="#1c2230"/><circle cx="8.6" cy="1.4" r="0.8" fill="#1c2230"/></svg>
<svg style="left:4px;top:148.36px" width="9.2" height="9.2" viewBox="0 0 10 10"><circle cx="5" cy="5" r="3.9" fill="none" stroke="#1c2230" stroke-width="1"/><path d="M5 5 L7.8 2.4" stroke="#2a5cb8" stroke-width="0.9"/><circle cx="5" cy="5" r="0.8" fill="#2a5cb8"/></svg>
<svg style="left:4px;top:160.12px" width="9.2" height="9.2" viewBox="0 0 10 10"><path d="M2.4 2 Q3.4 0.4 5 1.6 Q7.2 0.6 7.6 2.8 Q9.6 3.6 8.4 5.4 Q9.4 7.6 7 7.8 Q6 9.6 4.2 8.4 Q1.8 9.2 1.8 6.8 Q0 5.6 1.4 4.2 Q0.8 2.4 2.4 2Z" fill="none" stroke="#1c2230" stroke-width="0.9"/></svg>
<svg style="left:4px;top:171.88px" width="9.2" height="9.2" viewBox="0 0 10 10"><path d="M0.8 7.6 Q2.6 2 5 5.4 Q7 8.2 9.2 2.4" fill="none" stroke="#1c2230" stroke-width="1"/></svg>
<svg style="left:4px;top:183.64px" width="9.2" height="9.2" viewBox="0 0 10 10"><ellipse cx="5" cy="5" rx="4.2" ry="2.6" fill="none" stroke="#2a5cb8" stroke-width="1.1"/><circle cx="5" cy="5" r="0.7" fill="#1c2230"/></svg>
<svg style="left:4px;top:195.4px" width="9.2" height="9.2" viewBox="0 0 10 10"><path d="M8.8 6.2 A4 2.6 0 1 1 8.6 3.6" fill="none" stroke="#2a5cb8" stroke-width="1.1"/><circle cx="8.7" cy="6.2" r="0.8" fill="#1c2230"/></svg>
<svg style="left:4px;top:207.16px" width="9.2" height="9.2" viewBox="0 0 10 10"><rect x="0.8" y="0.8" width="5.4" height="5" fill="#cfe0f6" stroke="#2a5cb8" stroke-width="0.8"/><rect x="3.4" y="4" width="4.6" height="3.8" fill="#efd64a" stroke="#7a6a1a" stroke-width="0.6"/><path d="M7 7 L9.4 9.4" stroke="#1c2230" stroke-width="1"/></svg>
<svg style="left:4px;top:218.92px" width="9.2" height="9.2" viewBox="0 0 10 10"><rect x="1" y="1.6" width="5" height="3.6" fill="#cfe0f6" stroke="#2a5cb8" stroke-width="0.8"/><rect x="3.6" y="4.4" width="5" height="3.8" fill="#efd64a" stroke="#7a6a1a" stroke-width="0.6"/></svg>
<svg style="left:4px;top:230.68px" width="9.2" height="9.2" viewBox="0 0 10 10"><circle cx="5" cy="5" r="0.9" fill="#2a5cb8"/></svg>
<svg style="left:4px;top:242.44px" width="9.2" height="9.2" viewBox="0 0 10 10"><path d="M2.6 0.6 V9.4 M7.4 0.6 V9.4 M0.6 2.6 H9.4 M0.6 7.4 H9.4" stroke="#2a5cb8" stroke-width="1"/><path d="M3.2 3.2 L6.8 6.8 M3.2 5 L5 6.8 M5 3.2 L6.8 5" stroke="#2a5cb8" stroke-width="0.6"/></svg>
<svg style="left:4px;top:254.2px" width="9.2" height="9.2" viewBox="0 0 10 10"><path d="M2.6 0.6 V9.4 M7.4 0.6 V9.4 M0.6 2.6 H9.4 M0.6 7.4 H9.4" stroke="#1c2230" stroke-width="1"/><rect x="3" y="3" width="4" height="4" fill="#26355e"/></svg>
<svg style="left:4px;top:265.96px" width="9.2" height="9.2" viewBox="0 0 10 10"><path d="M1 8.6 V2.4 H5.6 Q9 2.6 9 6 V8.6Z" fill="#d6e4f6" stroke="#2a5cb8" stroke-width="0.9"/><circle cx="5.6" cy="5.8" r="1.6" fill="#fff" stroke="#2a5cb8" stroke-width="0.7"/></svg>
<svg style="left:4px;top:277.72px" width="9.2" height="9.2" viewBox="0 0 10 10"><rect x="0.8" y="1.4" width="8.4" height="7.2" fill="#cfe0f6" stroke="#2a5cb8" stroke-width="0.8"/><rect x="0.8" y="1.4" width="8.4" height="2" fill="#2a5cb8"/><path d="M3.6 3.4 V8.6 M6.4 3.4 V8.6 M0.8 6 H9.2" stroke="#2a5cb8" stroke-width="0.6"/></svg>
<svg style="left:4px;top:289.48px" width="9.2" height="9.2" viewBox="0 0 10 10"><text x="5" y="9" font-family="Liberation Sans,sans-serif" font-size="10.5" fill="#1c2230" text-anchor="middle">A</text></svg>
<svg style="left:17.6px;top:77.8px" width="9.2" height="9.2" viewBox="0 0 10 10"><path d="M1 8.6 L5.2 4.4 L7 6.2 L2.8 9.2Z" fill="#e8b0b8" stroke="#8a3a4a" stroke-width="0.5"/><path d="M5 4.6 L8.6 0.8 L9.6 1.8 L6.4 5.8Z" fill="#e2b630" stroke="#7a5a1a" stroke-width="0.5"/><path d="M0.4 9.4 H6" stroke="#2a5cb8" stroke-width="0.8"/></svg>
<svg style="left:17.6px;top:89.56px" width="9.2" height="9.2" viewBox="0 0 10 10"><circle cx="3.2" cy="3" r="2" fill="none" stroke="#1c2230" stroke-width="0.9"/><circle cx="6.8" cy="6.8" r="2" fill="none" stroke="#2a5cb8" stroke-width="0.9"/><circle cx="6.4" cy="3.4" r="1.6" fill="none" stroke="#1c2230" stroke-width="0.8"/></svg>
<svg style="left:17.6px;top:101.32px" width="9.2" height="9.2" viewBox="0 0 10 10"><path d="M4 1.4 V8.8 H0.8Z" fill="#e4ebf6" stroke="#1c2230" stroke-width="0.8"/><path d="M6 1.4 V8.8 H9.2Z" fill="#e4ebf6" stroke="#1c2230" stroke-width="0.8"/><path d="M5 0.2 V9.8" stroke="#2a5cb8" stroke-width="0.8"/></svg>
<svg style="left:17.6px;top:113.08px" width="9.2" height="9.2" viewBox="0 0 10 10"><path d="M0.8 8.8 H9.2 V6.4 Q8.6 2 5 2.4 Q2.4 2.6 2.2 5.4 Q0.8 5.6 0.8 8.8Z" fill="#9ab8e6" stroke="#2a5cb8" stroke-width="0.9"/><path d="M3 8.8 V7.4 Q3.4 4.4 5.4 4.6 Q7 4.8 7.2 8.8" fill="#eef1f6" stroke="#2a5cb8" stroke-width="0.6"/></svg>
<svg style="left:17.6px;top:124.84px" width="9.2" height="9.2" viewBox="0 0 10 10"><g fill="#e4ebf6" stroke="#2a3a5e" stroke-width="0.9"><rect x="0.9" y="0.9" width="3.2" height="3.2"/><rect x="5.9" y="0.9" width="3.2" height="3.2"/><rect x="0.9" y="5.9" width="3.2" height="3.2"/><rect x="5.9" y="5.9" width="3.2" height="3.2"/></g></svg>
<svg style="left:17.6px;top:136.6px" width="9.2" height="9.2" viewBox="0 0 10 10"><path d="M5 0.4 V9.6 M0.4 5 H9.6" stroke="#2a5cb8" stroke-width="1"/><path d="M5 0 l1.6 2 h-3.2z M5 10 l1.6 -2 h-3.2z M0 5 l2 -1.6 v3.2z M10 5 l-2 -1.6 v3.2z" fill="#2a5cb8"/></svg>
<svg style="left:17.6px;top:148.36px" width="9.2" height="9.2" viewBox="0 0 10 10"><path d="M8 3 A3.8 3.8 0 1 1 4.2 1.4" fill="none" stroke="#2a5cb8" stroke-width="1.3"/><path d="M3.4 0 L6 1.4 L3.6 3.2Z" fill="#2a5cb8"/></svg>
<svg style="left:17.6px;top:160.12px" width="9.2" height="9.2" viewBox="0 0 10 10"><rect x="0.8" y="0.8" width="8.4" height="8.4" fill="#e8eef8" stroke="#9ab0d4" stroke-width="0.8"/><rect x="0.8" y="4.4" width="4.8" height="4.8" fill="#9ab8e6" stroke="#2a5cb8" stroke-width="0.8"/></svg>
<svg style="left:17.6px;top:171.88px" width="9.2" height="9.2" viewBox="0 0 10 10"><path d="M1.4 9 V1 H4.6 L8.6 9Z" fill="#c6d8f2" stroke="#1c2230" stroke-width="0.8"/><path d="M4.6 1 V9" stroke="#1c2230" stroke-width="0.6"/></svg>
<svg style="left:17.6px;top:183.64px" width="9.2" height="9.2" viewBox="0 0 10 10"><path d="M0.6 5.6 H3.6 M6 4.4 H9.4" stroke="#2a5cb8" stroke-width="0.9"/><path d="M3.6 8.6 L6.4 1.2" stroke="#2a5cb8" stroke-width="0.9"/></svg>
<svg style="left:17.6px;top:195.4px" width="9.2" height="9.2" viewBox="0 0 10 10"><path d="M0.6 5.4 H5.4" stroke="#2a5cb8" stroke-width="0.9"/><path d="M6 8.8 L8.8 1.4" stroke="#2a5cb8" stroke-width="0.9"/><path d="M5.4 5.4 h1.4" stroke="#1c2230" stroke-width="0.7"/></svg>
<svg style="left:17.6px;top:207.16px" width="9.2" height="9.2" viewBox="0 0 10 10"><rect x="0.8" y="1.8" width="8.4" height="6.4" rx="0.6" fill="#e8eef6" stroke="#1c2230" stroke-width="0.9"/></svg>
<svg style="left:17.6px;top:218.92px" width="9.2" height="9.2" viewBox="0 0 10 10"><path d="M3.6 1.8 H0.8 V8.2 H9.2 V1.8 H6.4" fill="none" stroke="#1c2230" stroke-width="0.9"/></svg>
<svg style="left:17.6px;top:230.68px" width="9.2" height="9.2" viewBox="0 0 10 10"><path d="M0.4 5 H4 M6 5 H9.6" stroke="#1c2230" stroke-width="1"/><path d="M4.4 5 l-2 -1.4 v2.8z M5.6 5 l2 -1.4 v2.8z" fill="#1c2230"/></svg>
<svg style="left:17.6px;top:242.44px" width="9.2" height="9.2" viewBox="0 0 10 10"><path d="M1 9.2 V4 L4 1 H9.2" fill="none" stroke="#2a5cb8" stroke-width="1.1"/></svg>
<svg style="left:17.6px;top:254.2px" width="9.2" height="9.2" viewBox="0 0 10 10"><path d="M1 9.2 V5 Q1.2 1.2 5.6 1 H9.2" fill="none" stroke="#2a5cb8" stroke-width="1.1"/></svg>
<svg style="left:17.6px;top:265.96px" width="9.2" height="9.2" viewBox="0 0 10 10"><path d="M1 9 L5 5" stroke="#c83a2a" stroke-width="1.4"/><path d="M4.4 5.6 L8.6 1.4" stroke="#e2b630" stroke-width="1.6"/><circle cx="3" cy="7" r="1.6" fill="#d8482a"/><path d="M6.2 6.4 L8.8 8.8 M6.6 3 L9 1" stroke="#8a8a9a" stroke-width="0.6"/></svg>
<div style="left:599.2px;top:70.8px;width:13.2px;height:364px;background:#eef1f6;"></div>
<div style="left:600.8px;top:72.4px;width:11.4px;height:54px;background:linear-gradient(90deg,#f6f7fa,#eceff4);"></div>
<div style="left:600.8px;top:126.2px;width:11.4px;height:0.8px;background:#cfd4dc;"></div>
<div style="left:602px;top:73.6px;width:9px;height:1.4px;background:repeating-linear-gradient(90deg,#b9c0cc 0 1px,transparent 1px 2px);"></div>
<svg style="left:602.2px;top:77.2px" width="9.2" height="9.2" viewBox="0 0 10 10"><rect x="1" y="1" width="5.6" height="5.2" fill="#4a78c0" stroke="#2a4a8a" stroke-width="0.6"/><rect x="3.4" y="3.6" width="5.6" height="5.2" fill="#b8cdec" stroke="#4a6aa8" stroke-width="0.6"/></svg>
<svg style="left:602.2px;top:88.85px" width="9.2" height="9.2" viewBox="0 0 10 10"><rect x="1" y="1" width="5.2" height="5" fill="#b8cdec" stroke="#4a6aa8" stroke-width="0.6"/><rect x="3.2" y="3.2" width="5.6" height="5.6" fill="#3a68b8" stroke="#2a4a8a" stroke-width="0.6"/><rect x="5.6" y="6.2" width="3.6" height="3" fill="#dfe8f6" stroke="#4a6aa8" stroke-width="0.5"/></svg>
<svg style="left:602.2px;top:100.5px" width="9.2" height="9.2" viewBox="0 0 10 10"><rect x="1.4" y="1" width="6.8" height="5.6" fill="#3a68b8" stroke="#2a4a8a" stroke-width="0.6"/><rect x="2.4" y="5.4" width="6.8" height="3.6" fill="#9ab4dc" stroke="#4a6aa8" stroke-width="0.6"/></svg>
<svg style="left:602.2px;top:112.15px" width="9.2" height="9.2" viewBox="0 0 10 10"><rect x="1" y="1" width="6" height="5" fill="#3a68b8" stroke="#2a4a8a" stroke-width="0.6"/><rect x="3" y="4" width="6.2" height="5" fill="#dfe8f6" stroke="#4a6aa8" stroke-width="0.6"/><path d="M3.6 5.8 H8.6 M3.6 7.4 H8.6" stroke="#7a94c4" stroke-width="0.6"/></svg>
<!-- sec_draw -->
<svg style="left:30.2px;top:70.8px;background:#000" width="569" height="353.4" viewBox="0 0 569 353.4" font-family="Liberation Sans,Noto Sans CJK SC,sans-serif"><defs><pattern id="hv" width="2.45" height="4" patternUnits="userSpaceOnUse" x="0.3"><rect width="2.45" height="4" fill="#240000"/><rect x="0.2" width="0.95" height="4" fill="#d80000"/></pattern><pattern id="hh3" width="4" height="3.2" patternUnits="userSpaceOnUse"><rect width="4" height="1" fill="#d00000" fill-opacity="0.72"/></pattern><pattern id="hh2" width="4" height="1.9" patternUnits="userSpaceOnUse"><rect width="4" height="0.85" fill="#d00000" fill-opacity="0.66"/></pattern></defs><rect x="49.5" y="55.2" width="64.5" height="46.7" fill="url(#hv)"/><rect x="49.5" y="106.7" width="64.5" height="85.8" fill="url(#hv)"/><rect x="49.5" y="55.2" width="64.5" height="14" fill="url(#hh3)"/><rect x="49.5" y="69.2" width="64.5" height="32.8" fill="url(#hh2)"/><rect x="49.5" y="106.4" width="64.5" height="22.8" fill="url(#hh2)"/><rect x="49.5" y="129.2" width="64.5" height="40" fill="url(#hh3)"/><rect x="49.5" y="169.2" width="64.5" height="23.3" fill="url(#hh2)"/><path d="M47.5 41 L50.1 55.2" stroke="#e00000" stroke-width="0.9" fill="none"/><path d="M50.1 192.5 L50.1 210.2" stroke="#e00000" stroke-width="0.9" fill="none"/><path d="M51.16 41 L52.53 55.2" stroke="#8a0000" stroke-width="0.9" fill="none"/><path d="M52.53 192.5 L52.53 210.2" stroke="#8a0000" stroke-width="0.9" fill="none"/><path d="M54.29 41 L54.97 55.2" stroke="#e00000" stroke-width="0.9" fill="none"/><path d="M54.97 192.5 L54.97 210.2" stroke="#e00000" stroke-width="0.9" fill="none"/><path d="M57.09 41 L57.4 55.2" stroke="#8a0000" stroke-width="0.9" fill="none"/><path d="M57.4 192.5 L57.4 210.2" stroke="#8a0000" stroke-width="0.9" fill="none"/><path d="M59.7 41 L59.84 55.2" stroke="#e00000" stroke-width="0.9" fill="none"/><path d="M59.84 192.5 L59.84 210.2" stroke="#e00000" stroke-width="0.9" fill="none"/><path d="M62.22 41 L62.27 55.2" stroke="#8a0000" stroke-width="0.9" fill="none"/><path d="M62.27 192.5 L62.27 210.2" stroke="#8a0000" stroke-width="0.9" fill="none"/><path d="M64.69 41 L64.71 55.2" stroke="#e00000" stroke-width="0.9" fill="none"/><path d="M64.71 192.5 L64.71 210.2" stroke="#e00000" stroke-width="0.9" fill="none"/><path d="M67.14 41 L67.14 55.2" stroke="#8a0000" stroke-width="0.9" fill="none"/><path d="M67.14 192.5 L67.14 210.2" stroke="#8a0000" stroke-width="0.9" fill="none"/><path d="M69.58 41 L69.58 55.2" stroke="#e00000" stroke-width="0.9" fill="none"/><path d="M69.58 192.5 L69.58 210.2" stroke="#e00000" stroke-width="0.9" fill="none"/><path d="M72.01 41 L72.01 55.2" stroke="#8a0000" stroke-width="0.9" fill="none"/><path d="M72.01 192.5 L72.01 210.2" stroke="#8a0000" stroke-width="0.9" fill="none"/><path d="M74.45 41 L74.45 55.2" stroke="#e00000" stroke-width="0.9" fill="none"/><path d="M74.45 192.5 L74.45 210.2" stroke="#e00000" stroke-width="0.9" fill="none"/><path d="M76.88 41 L76.88 55.2" stroke="#8a0000" stroke-width="0.9" fill="none"/><path d="M76.88 192.5 L76.88 210.2" stroke="#8a0000" stroke-width="0.9" fill="none"/><path d="M79.32 41 L79.32 55.2" stroke="#e00000" stroke-width="0.9" fill="none"/><path d="M79.32 192.5 L79.32 210.2" stroke="#e00000" stroke-width="0.9" fill="none"/><path d="M81.75 41 L81.75 55.2" stroke="#8a0000" stroke-width="0.9" fill="none"/><path d="M81.75 192.5 L81.75 210.2" stroke="#8a0000" stroke-width="0.9" fill="none"/><path d="M84.18 41 L84.18 55.2" stroke="#e00000" stroke-width="0.9" fill="none"/><path d="M84.18 192.5 L84.18 210.2" stroke="#e00000" stroke-width="0.9" fill="none"/><path d="M86.62 41 L86.62 55.2" stroke="#8a0000" stroke-width="0.9" fill="none"/><path d="M86.62 192.5 L86.62 210.2" stroke="#8a0000" stroke-width="0.9" fill="none"/><path d="M89.05 41 L89.05 55.2" stroke="#e00000" stroke-width="0.9" fill="none"/><path d="M89.05 192.5 L89.05 210.2" stroke="#e00000" stroke-width="0.9" fill="none"/><path d="M91.49 41 L91.49 55.2" stroke="#8a0000" stroke-width="0.9" fill="none"/><path d="M91.49 192.5 L91.49 210.2" stroke="#8a0000" stroke-width="0.9" fill="none"/><path d="M93.92 41 L93.92 55.2" stroke="#e00000" stroke-width="0.9" fill="none"/><path d="M93.92 192.5 L93.92 210.2" stroke="#e00000" stroke-width="0.9" fill="none"/><path d="M96.36 41 L96.36 55.2" stroke="#8a0000" stroke-width="0.9" fill="none"/><path d="M96.36 192.5 L96.36 210.2" stroke="#8a0000" stroke-width="0.9" fill="none"/><path d="M98.81 41 L98.79 55.2" stroke="#e00000" stroke-width="0.9" fill="none"/><path d="M98.79 192.5 L98.79 210.2" stroke="#e00000" stroke-width="0.9" fill="none"/><path d="M101.28 41 L101.23 55.2" stroke="#8a0000" stroke-width="0.9" fill="none"/><path d="M101.23 192.5 L101.23 210.2" stroke="#8a0000" stroke-width="0.9" fill="none"/><path d="M103.8 41 L103.66 55.2" stroke="#e00000" stroke-width="0.9" fill="none"/><path d="M103.66 192.5 L103.66 210.2" stroke="#e00000" stroke-width="0.9" fill="none"/><path d="M106.41 41 L106.1 55.2" stroke="#8a0000" stroke-width="0.9" fill="none"/><path d="M106.1 192.5 L106.1 210.2" stroke="#8a0000" stroke-width="0.9" fill="none"/><path d="M109.21 41 L108.53 55.2" stroke="#e00000" stroke-width="0.9" fill="none"/><path d="M108.53 192.5 L108.53 210.2" stroke="#e00000" stroke-width="0.9" fill="none"/><path d="M112.34 41 L110.97 55.2" stroke="#8a0000" stroke-width="0.9" fill="none"/><path d="M110.97 192.5 L110.97 210.2" stroke="#8a0000" stroke-width="0.9" fill="none"/><path d="M116 41 L113.4 55.2" stroke="#e00000" stroke-width="0.9" fill="none"/><path d="M113.4 192.5 L113.4 210.2" stroke="#e00000" stroke-width="0.9" fill="none"/><rect x="49.2" y="55.2" width="65.1" height="46.7" stroke="#8a8a8a" stroke-width="0.9" fill="none"/><rect x="49.2" y="106.7" width="65.1" height="85.8" stroke="#8a8a8a" stroke-width="0.9" fill="none"/><rect x="33.1" y="39.6" width="97.5" height="15.6" stroke="#e4e4e4" stroke-width="0.9" fill="none"/><rect x="33.1" y="192.5" width="97.5" height="26.3" stroke="#e4e4e4" stroke-width="0.9" fill="none"/><path d="M48.5 101.9 L115 101.9" stroke="#d0d0d0" stroke-width="0.4" fill="none"/><path d="M48.5 106.7 L115 106.7" stroke="#d0d0d0" stroke-width="0.4" fill="none"/><path d="M82.7 100.6 L81.5 103.6 L83.5 104.6 L82.1 108" stroke="#f4f4f4" stroke-width="0.7" fill="none"/><path d="M87.1 55.2 L87.1 211.2" stroke="#f4e400" stroke-width="1.1" fill="none"/><path d="M45.2 53.2 L45.2 210.2" stroke="#e8e000" stroke-width="0.9" fill="none"/><path d="M43.5 55.2 L46.9 55.2" stroke="#e8e000" stroke-width="0.9" fill="none"/><path d="M43.5 91.2 L46.9 91.2" stroke="#e8e000" stroke-width="0.9" fill="none"/><path d="M43.5 126.2 L46.9 126.2" stroke="#e8e000" stroke-width="0.9" fill="none"/><path d="M43.5 192.2 L46.9 192.2" stroke="#e8e000" stroke-width="0.9" fill="none"/><path d="M43.5 209.8 L46.9 209.8" stroke="#e8e000" stroke-width="0.9" fill="none"/><text transform="translate(43.9 77.2) rotate(-90)" font-size="3.1" fill="#e8e000" font-weight="bold">175</text><text transform="translate(43.9 119.2) rotate(-90)" font-size="3.1" fill="#e8e000" font-weight="bold">3@10+15</text><text transform="translate(43.9 161.2) rotate(-90)" font-size="3.1" fill="#e8e000" font-weight="bold">800</text><text transform="translate(43.9 203.2) rotate(-90)" font-size="3.1" fill="#e8e000" font-weight="bold">85</text><path d="M117.2 53.2 L117.2 210.2" stroke="#e8e000" stroke-width="0.9" fill="none"/><path d="M115.5 55.2 L118.9 55.2" stroke="#e8e000" stroke-width="0.9" fill="none"/><path d="M115.5 91.2 L118.9 91.2" stroke="#e8e000" stroke-width="0.9" fill="none"/><path d="M115.5 126.2 L118.9 126.2" stroke="#e8e000" stroke-width="0.9" fill="none"/><path d="M115.5 192.2 L118.9 192.2" stroke="#e8e000" stroke-width="0.9" fill="none"/><path d="M115.5 209.8 L118.9 209.8" stroke="#e8e000" stroke-width="0.9" fill="none"/><text transform="translate(120.7 77.2) rotate(-90)" font-size="3.1" fill="#e8e000" font-weight="bold">175</text><text transform="translate(120.7 119.2) rotate(-90)" font-size="3.1" fill="#e8e000" font-weight="bold">3@10+15</text><text transform="translate(120.7 161.2) rotate(-90)" font-size="3.1" fill="#e8e000" font-weight="bold">800</text><text transform="translate(120.7 203.2) rotate(-90)" font-size="3.1" fill="#e8e000" font-weight="bold">85</text><path d="M45.2 33.7 L117.2 33.7" stroke="#e8e000" stroke-width="0.9" fill="none"/><path d="M48.6 35.8 L113.8 35.8" stroke="#e8e000" stroke-width="0.8" fill="none"/><path d="M46.2 31.2 L46.2 39.2" stroke="#e8e000" stroke-width="0.9" fill="none"/><path d="M116.2 31.2 L116.2 39.2" stroke="#e8e000" stroke-width="0.9" fill="none"/><path d="M49.2 33.2 L49.2 39.2" stroke="#e8e000" stroke-width="0.8" fill="none"/><path d="M113.2 33.2 L113.2 39.2" stroke="#e8e000" stroke-width="0.8" fill="none"/><text x="81.2" y="33.8" font-size="3.6" fill="#e8e000" text-anchor="middle">▬</text><text x="76.4" y="25.4" font-size="4.7" fill="#f4f4f4" text-anchor="start" font-weight="bold">正 面</text><path d="M76 26.6 L87 26.6" stroke="#f4f4f4" stroke-width="1" fill="none"/><text x="89.6" y="25" font-size="3" fill="#d0d0d0" text-anchor="start">1:50</text><text x="36.4" y="47.4" font-size="4.2" fill="#f0f0f0" text-anchor="start">承</text><text x="36.4" y="53.4" font-size="4.2" fill="#f0f0f0" text-anchor="start">台</text><text x="123.4" y="47.4" font-size="4.2" fill="#f0f0f0" text-anchor="start">承</text><text x="123.4" y="53.4" font-size="4.2" fill="#f0f0f0" text-anchor="start">台</text><text x="36.4" y="201.2" font-size="4.2" fill="#f0f0f0" text-anchor="start">基</text><text x="36.4" y="214.2" font-size="4.2" fill="#f0f0f0" text-anchor="start">础</text><text x="123.4" y="201.2" font-size="4.2" fill="#f0f0f0" text-anchor="start">基</text><text x="123.4" y="214.2" font-size="4.2" fill="#f0f0f0" text-anchor="start">础</text><circle cx="87" cy="213.4" r="1.9" stroke="#e8e000" stroke-width="0.7" fill="none"/><circle cx="87" cy="213.4" r="0.8" stroke="#e8e000" stroke-width="0.5" fill="none"/><path d="M31.7 46.2 L34.1 47.4 L32.1 48.4 L34.5 49.6" stroke="#f0f0f0" stroke-width="0.6" fill="none"/><path d="M31.7 204 L34.1 205.2 L32.1 206.2 L34.5 207.4" stroke="#f0f0f0" stroke-width="0.6" fill="none"/><path d="M129.2 46.2 L131.6 47.4 L129.6 48.4 L132 49.6" stroke="#f0f0f0" stroke-width="0.6" fill="none"/><path d="M129.2 204 L131.6 205.2 L129.6 206.2 L132 207.4" stroke="#f0f0f0" stroke-width="0.6" fill="none"/><rect x="163.2" y="55.2" width="34.8" height="46.7" fill="url(#hv)"/><rect x="163.2" y="106.7" width="34.8" height="85.8" fill="url(#hv)"/><rect x="163.2" y="55.2" width="34.8" height="14" fill="url(#hh3)"/><rect x="163.2" y="69.2" width="34.8" height="32.8" fill="url(#hh2)"/><rect x="163.2" y="106.4" width="34.8" height="22.8" fill="url(#hh2)"/><rect x="163.2" y="129.2" width="34.8" height="40" fill="url(#hh3)"/><rect x="163.2" y="169.2" width="34.8" height="23.3" fill="url(#hh2)"/><path d="M161.2 41 L163.8 55.2" stroke="#e00000" stroke-width="0.9" fill="none"/><path d="M163.8 192.5 L163.8 210.2" stroke="#e00000" stroke-width="0.9" fill="none"/><path d="M165.44 41 L166.2 55.2" stroke="#8a0000" stroke-width="0.9" fill="none"/><path d="M166.2 192.5 L166.2 210.2" stroke="#8a0000" stroke-width="0.9" fill="none"/><path d="M168.42 41 L168.6 55.2" stroke="#e00000" stroke-width="0.9" fill="none"/><path d="M168.6 192.5 L168.6 210.2" stroke="#e00000" stroke-width="0.9" fill="none"/><path d="M170.97 41 L171 55.2" stroke="#8a0000" stroke-width="0.9" fill="none"/><path d="M171 192.5 L171 210.2" stroke="#8a0000" stroke-width="0.9" fill="none"/><path d="M173.4 41 L173.4 55.2" stroke="#e00000" stroke-width="0.9" fill="none"/><path d="M173.4 192.5 L173.4 210.2" stroke="#e00000" stroke-width="0.9" fill="none"/><path d="M175.8 41 L175.8 55.2" stroke="#8a0000" stroke-width="0.9" fill="none"/><path d="M175.8 192.5 L175.8 210.2" stroke="#8a0000" stroke-width="0.9" fill="none"/><path d="M178.2 41 L178.2 55.2" stroke="#e00000" stroke-width="0.9" fill="none"/><path d="M178.2 192.5 L178.2 210.2" stroke="#e00000" stroke-width="0.9" fill="none"/><path d="M180.6 41 L180.6 55.2" stroke="#8a0000" stroke-width="0.9" fill="none"/><path d="M180.6 192.5 L180.6 210.2" stroke="#8a0000" stroke-width="0.9" fill="none"/><path d="M183 41 L183 55.2" stroke="#e00000" stroke-width="0.9" fill="none"/><path d="M183 192.5 L183 210.2" stroke="#e00000" stroke-width="0.9" fill="none"/><path d="M185.4 41 L185.4 55.2" stroke="#8a0000" stroke-width="0.9" fill="none"/><path d="M185.4 192.5 L185.4 210.2" stroke="#8a0000" stroke-width="0.9" fill="none"/><path d="M187.8 41 L187.8 55.2" stroke="#e00000" stroke-width="0.9" fill="none"/><path d="M187.8 192.5 L187.8 210.2" stroke="#e00000" stroke-width="0.9" fill="none"/><path d="M190.23 41 L190.2 55.2" stroke="#8a0000" stroke-width="0.9" fill="none"/><path d="M190.2 192.5 L190.2 210.2" stroke="#8a0000" stroke-width="0.9" fill="none"/><path d="M192.78 41 L192.6 55.2" stroke="#e00000" stroke-width="0.9" fill="none"/><path d="M192.6 192.5 L192.6 210.2" stroke="#e00000" stroke-width="0.9" fill="none"/><path d="M195.76 41 L195 55.2" stroke="#8a0000" stroke-width="0.9" fill="none"/><path d="M195 192.5 L195 210.2" stroke="#8a0000" stroke-width="0.9" fill="none"/><path d="M200 41 L197.4 55.2" stroke="#e00000" stroke-width="0.9" fill="none"/><path d="M197.4 192.5 L197.4 210.2" stroke="#e00000" stroke-width="0.9" fill="none"/><rect x="162.9" y="55.2" width="35.4" height="46.7" stroke="#8a8a8a" stroke-width="0.9" fill="none"/><rect x="162.9" y="106.7" width="35.4" height="85.8" stroke="#8a8a8a" stroke-width="0.9" fill="none"/><path d="M164.1 55.2 L164.1 192.5" stroke="#e0208a" stroke-width="0.9" fill="none"/><rect x="146" y="39.6" width="67.6" height="15.6" stroke="#e4e4e4" stroke-width="0.9" fill="none"/><rect x="146" y="192.5" width="67.6" height="26.3" stroke="#e4e4e4" stroke-width="0.9" fill="none"/><path d="M162.2 101.9 L199 101.9" stroke="#d0d0d0" stroke-width="0.4" fill="none"/><path d="M162.2 106.7 L199 106.7" stroke="#d0d0d0" stroke-width="0.4" fill="none"/><path d="M180.9 100.6 L179.7 103.6 L181.7 104.6 L180.3 108" stroke="#f4f4f4" stroke-width="0.7" fill="none"/><path d="M185.3 55.2 L185.3 211.2" stroke="#f4e400" stroke-width="1.1" fill="none"/><path d="M159.2 53.2 L159.2 210.2" stroke="#e8e000" stroke-width="0.9" fill="none"/><path d="M157.5 55.2 L160.9 55.2" stroke="#e8e000" stroke-width="0.9" fill="none"/><path d="M157.5 91.2 L160.9 91.2" stroke="#e8e000" stroke-width="0.9" fill="none"/><path d="M157.5 126.2 L160.9 126.2" stroke="#e8e000" stroke-width="0.9" fill="none"/><path d="M157.5 192.2 L160.9 192.2" stroke="#e8e000" stroke-width="0.9" fill="none"/><path d="M157.5 209.8 L160.9 209.8" stroke="#e8e000" stroke-width="0.9" fill="none"/><text transform="translate(157.9 77.2) rotate(-90)" font-size="3.1" fill="#e8e000" font-weight="bold">175</text><text transform="translate(157.9 119.2) rotate(-90)" font-size="3.1" fill="#e8e000" font-weight="bold">3@10+15</text><text transform="translate(157.9 161.2) rotate(-90)" font-size="3.1" fill="#e8e000" font-weight="bold">800</text><text transform="translate(157.9 203.2) rotate(-90)" font-size="3.1" fill="#e8e000" font-weight="bold">85</text><path d="M201.8 53.2 L201.8 210.2" stroke="#e8e000" stroke-width="0.9" fill="none"/><path d="M200.1 55.2 L203.5 55.2" stroke="#e8e000" stroke-width="0.9" fill="none"/><path d="M200.1 91.2 L203.5 91.2" stroke="#e8e000" stroke-width="0.9" fill="none"/><path d="M200.1 126.2 L203.5 126.2" stroke="#e8e000" stroke-width="0.9" fill="none"/><path d="M200.1 192.2 L203.5 192.2" stroke="#e8e000" stroke-width="0.9" fill="none"/><path d="M200.1 209.8 L203.5 209.8" stroke="#e8e000" stroke-width="0.9" fill="none"/><text transform="translate(205.3 77.2) rotate(-90)" font-size="3.1" fill="#e8e000" font-weight="bold">175</text><text transform="translate(205.3 119.2) rotate(-90)" font-size="3.1" fill="#e8e000" font-weight="bold">3@10+15</text><text transform="translate(205.3 161.2) rotate(-90)" font-size="3.1" fill="#e8e000" font-weight="bold">800</text><text transform="translate(205.3 203.2) rotate(-90)" font-size="3.1" fill="#e8e000" font-weight="bold">85</text><path d="M206.2 41.2 L206.2 192.2" stroke="#e8e000" stroke-width="0.9" fill="none"/><path d="M203.2 41.2 L207.2 41.2" stroke="#e8e000" stroke-width="0.8" fill="none"/><text x="204.2" y="49.2" font-size="3.2" fill="#e8e000" text-anchor="start">▮</text><path d="M159.2 33.7 L201.8 33.7" stroke="#e8e000" stroke-width="0.9" fill="none"/><path d="M162.6 35.8 L198.4 35.8" stroke="#e8e000" stroke-width="0.8" fill="none"/><path d="M160.2 31.2 L160.2 39.2" stroke="#e8e000" stroke-width="0.9" fill="none"/><path d="M200.8 31.2 L200.8 39.2" stroke="#e8e000" stroke-width="0.9" fill="none"/><path d="M163.2 33.2 L163.2 39.2" stroke="#e8e000" stroke-width="0.8" fill="none"/><path d="M197.8 33.2 L197.8 39.2" stroke="#e8e000" stroke-width="0.8" fill="none"/><text x="180.5" y="33.8" font-size="3.6" fill="#e8e000" text-anchor="middle">▬</text><text x="175.2" y="25.4" font-size="4.7" fill="#f4f4f4" text-anchor="start" font-weight="bold">侧 面</text><path d="M174.8 26.6 L185.8 26.6" stroke="#f4f4f4" stroke-width="1" fill="none"/><text x="188.4" y="25" font-size="3" fill="#d0d0d0" text-anchor="start">1:50</text><text x="149.8" y="47.4" font-size="4.2" fill="#f0f0f0" text-anchor="start">承</text><text x="149.8" y="53.4" font-size="4.2" fill="#f0f0f0" text-anchor="start">台</text><text x="149.8" y="201.2" font-size="4.2" fill="#f0f0f0" text-anchor="start">基</text><text x="149.8" y="214.2" font-size="4.2" fill="#f0f0f0" text-anchor="start">础</text><text x="206.4" y="201.2" font-size="4.2" fill="#f0f0f0" text-anchor="start">基</text><text x="206.4" y="214.2" font-size="4.2" fill="#f0f0f0" text-anchor="start">础</text><circle cx="184.8" cy="213.4" r="1.9" stroke="#e8e000" stroke-width="0.7" fill="none"/><circle cx="190.4" cy="213.4" r="1.9" stroke="#e8e000" stroke-width="0.7" fill="none"/><path d="M144.6 46.2 L147 47.4 L145 48.4 L147.4 49.6" stroke="#f0f0f0" stroke-width="0.6" fill="none"/><path d="M144.6 204 L147 205.2 L145 206.2 L147.4 207.4" stroke="#f0f0f0" stroke-width="0.6" fill="none"/><path d="M212.2 46.2 L214.6 47.4 L212.6 48.4 L215 49.6" stroke="#f0f0f0" stroke-width="0.6" fill="none"/><path d="M212.2 204 L214.6 205.2 L212.6 206.2 L215 207.4" stroke="#f0f0f0" stroke-width="0.6" fill="none"/><text x="76.4" y="237.2" font-size="4.7" fill="#f4f4f4" text-anchor="start" font-weight="bold">平 面</text><path d="M76 238.4 L87 238.4" stroke="#f4f4f4" stroke-width="1" fill="none"/><text x="89.6" y="236.6" font-size="3" fill="#d0d0d0" text-anchor="start">1:50</text><rect x="48.9" y="255.9" width="66.7" height="34.4" rx="3" stroke="#e8e000" stroke-width="1.2" fill="none"/><rect x="49.9" y="256.9" width="64.7" height="32.4" rx="2.6" stroke="#b0b0b0" stroke-width="0.7" fill="none"/><rect x="50.9" y="257.9" width="62.7" height="30.4" rx="2.2" stroke="#e00000" stroke-width="1.1" fill="none"/><rect x="48.9" y="255.9" width="66.7" height="34.4" rx="3" fill="none" stroke="#000" stroke-width="1.3" stroke-dasharray="0.7 1.1"/><path d="M59.8 257.9 L59.8 288.3" stroke="#e00000" stroke-width="1" fill="none"/><path d="M68.6 257.9 L68.6 288.3" stroke="#e00000" stroke-width="1" fill="none"/><path d="M78.3 257.9 L78.3 288.3" stroke="#e00000" stroke-width="1" fill="none"/><path d="M86.1 257.9 L86.1 288.3" stroke="#e00000" stroke-width="1" fill="none"/><path d="M94.9 257.9 L94.9 288.3" stroke="#e00000" stroke-width="1" fill="none"/><path d="M103.7 257.9 L103.7 288.3" stroke="#e00000" stroke-width="1" fill="none"/><path d="M50.9 266.2 L113.6 266.2" stroke="#e00000" stroke-width="1" fill="none"/><path d="M50.9 275.6 L113.6 275.6" stroke="#e00000" stroke-width="1" fill="none"/><path d="M50.9 272 L53.1 272 L52 274.4 Z" stroke="#e8e000" stroke-width="0.3" fill="#e8e000"/><path d="M59.7 272 L61.9 272 L60.8 274.4 Z" stroke="#e8e000" stroke-width="0.3" fill="#e8e000"/><path d="M65.3 272 L67.5 272 L66.4 274.4 Z" stroke="#e8e000" stroke-width="0.3" fill="#e8e000"/><path d="M77.1 272 L79.3 272 L78.2 274.4 Z" stroke="#e8e000" stroke-width="0.3" fill="#e8e000"/><path d="M82.3 272 L84.5 272 L83.4 274.4 Z" stroke="#e8e000" stroke-width="0.3" fill="#e8e000"/><path d="M94.1 272 L96.3 272 L95.2 274.4 Z" stroke="#e8e000" stroke-width="0.3" fill="#e8e000"/><path d="M99.7 272 L101.9 272 L100.8 274.4 Z" stroke="#e8e000" stroke-width="0.3" fill="#e8e000"/><path d="M108.5 272 L110.7 272 L109.6 274.4 Z" stroke="#e8e000" stroke-width="0.3" fill="#e8e000"/><path d="M79.8 264.4 L83.2 264.4" stroke="#e8e000" stroke-width="1.2" fill="none"/><path d="M79.8 269.8 L83.2 269.8" stroke="#e8e000" stroke-width="1.2" fill="none"/><path d="M79.8 276.8 L83.2 276.8" stroke="#e8e000" stroke-width="1.2" fill="none"/><circle cx="52.8" cy="290.4" r="0.45" stroke="#e00000" stroke-width="0" fill="#e00000"/><circle cx="52.8" cy="256" r="0.45" stroke="#e00000" stroke-width="0" fill="#e00000"/><circle cx="57.4" cy="290.4" r="0.45" stroke="#e00000" stroke-width="0" fill="#e00000"/><circle cx="57.4" cy="256" r="0.45" stroke="#e00000" stroke-width="0" fill="#e00000"/><circle cx="62" cy="290.4" r="0.45" stroke="#e00000" stroke-width="0" fill="#e00000"/><circle cx="62" cy="256" r="0.45" stroke="#e00000" stroke-width="0" fill="#e00000"/><circle cx="66.6" cy="290.4" r="0.45" stroke="#e00000" stroke-width="0" fill="#e00000"/><circle cx="66.6" cy="256" r="0.45" stroke="#e00000" stroke-width="0" fill="#e00000"/><circle cx="71.2" cy="290.4" r="0.45" stroke="#e00000" stroke-width="0" fill="#e00000"/><circle cx="71.2" cy="256" r="0.45" stroke="#e00000" stroke-width="0" fill="#e00000"/><circle cx="75.8" cy="290.4" r="0.45" stroke="#e00000" stroke-width="0" fill="#e00000"/><circle cx="75.8" cy="256" r="0.45" stroke="#e00000" stroke-width="0" fill="#e00000"/><circle cx="80.4" cy="290.4" r="0.45" stroke="#e00000" stroke-width="0" fill="#e00000"/><circle cx="80.4" cy="256" r="0.45" stroke="#e00000" stroke-width="0" fill="#e00000"/><circle cx="85" cy="290.4" r="0.45" stroke="#e00000" stroke-width="0" fill="#e00000"/><circle cx="85" cy="256" r="0.45" stroke="#e00000" stroke-width="0" fill="#e00000"/><circle cx="89.6" cy="290.4" r="0.45" stroke="#e00000" stroke-width="0" fill="#e00000"/><circle cx="89.6" cy="256" r="0.45" stroke="#e00000" stroke-width="0" fill="#e00000"/><circle cx="94.2" cy="290.4" r="0.45" stroke="#e00000" stroke-width="0" fill="#e00000"/><circle cx="94.2" cy="256" r="0.45" stroke="#e00000" stroke-width="0" fill="#e00000"/><circle cx="98.8" cy="290.4" r="0.45" stroke="#e00000" stroke-width="0" fill="#e00000"/><circle cx="98.8" cy="256" r="0.45" stroke="#e00000" stroke-width="0" fill="#e00000"/><circle cx="103.4" cy="290.4" r="0.45" stroke="#e00000" stroke-width="0" fill="#e00000"/><circle cx="103.4" cy="256" r="0.45" stroke="#e00000" stroke-width="0" fill="#e00000"/><circle cx="108" cy="290.4" r="0.45" stroke="#e00000" stroke-width="0" fill="#e00000"/><circle cx="108" cy="256" r="0.45" stroke="#e00000" stroke-width="0" fill="#e00000"/><circle cx="112.6" cy="290.4" r="0.45" stroke="#e00000" stroke-width="0" fill="#e00000"/><circle cx="112.6" cy="256" r="0.45" stroke="#e00000" stroke-width="0" fill="#e00000"/><circle cx="81.3" cy="251.2" r="1.9" stroke="#e8e000" stroke-width="0.7" fill="none"/><circle cx="81.3" cy="251.2" r="0.7" stroke="#e8e000" stroke-width="0.5" fill="none"/><circle cx="81.3" cy="294.2" r="1.9" stroke="#e8e000" stroke-width="0.7" fill="none"/><circle cx="81.3" cy="294.2" r="0.7" stroke="#e8e000" stroke-width="0.5" fill="none"/><circle cx="44.2" cy="273.1" r="1.9" stroke="#e8e000" stroke-width="0.7" fill="none"/><circle cx="44.2" cy="273.1" r="0.7" stroke="#e8e000" stroke-width="0.5" fill="none"/><circle cx="118.4" cy="273.1" r="1.9" stroke="#e8e000" stroke-width="0.7" fill="none"/><circle cx="118.4" cy="273.1" r="0.7" stroke="#e8e000" stroke-width="0.5" fill="none"/><path d="M49.8 243 L113.4 243" stroke="#e8e000" stroke-width="0.9" fill="none"/><path d="M46.1 247.6 L117.4 247.6" stroke="#e8e000" stroke-width="0.9" fill="none"/><path d="M49.8 241.2 L49.8 250.2" stroke="#e8e000" stroke-width="0.9" fill="none"/><path d="M113.4 241.2 L113.4 250.2" stroke="#e8e000" stroke-width="0.9" fill="none"/><path d="M47.2 245.6 L47.2 250.2" stroke="#e8e000" stroke-width="0.9" fill="none"/><path d="M52.4 245.6 L52.4 250.2" stroke="#e8e000" stroke-width="0.9" fill="none"/><path d="M110.8 245.6 L110.8 250.2" stroke="#e8e000" stroke-width="0.9" fill="none"/><path d="M116.2 245.6 L116.2 250.2" stroke="#e8e000" stroke-width="0.9" fill="none"/><text x="81.4" y="242.6" font-size="3.2" fill="#e8e000" text-anchor="middle">▬</text><text x="81.4" y="247.2" font-size="3.2" fill="#e8e000" text-anchor="middle">▬▬</text><text x="47" y="249.8" font-size="3" fill="#e8e000" text-anchor="start">▪▪</text><text x="110.6" y="249.8" font-size="3" fill="#e8e000" text-anchor="start">▪▪</text><path d="M36.4 256.2 L36.4 290.2" stroke="#e8e000" stroke-width="0.9" fill="none"/><path d="M40.4 254.2 L40.4 292.8" stroke="#e8e000" stroke-width="0.9" fill="none"/><path d="M38.4 256.2 L43.2 256.2" stroke="#e8e000" stroke-width="0.8" fill="none"/><path d="M38.4 260.2 L43.2 260.2" stroke="#e8e000" stroke-width="0.8" fill="none"/><path d="M38.4 286.2 L43.2 286.2" stroke="#e8e000" stroke-width="0.8" fill="none"/><path d="M38.4 290.2 L43.2 290.2" stroke="#e8e000" stroke-width="0.8" fill="none"/><path d="M34.6 256.2 L38.2 256.2" stroke="#e8e000" stroke-width="0.8" fill="none"/><path d="M34.6 290.2 L38.2 290.2" stroke="#e8e000" stroke-width="0.8" fill="none"/><text x="32.8" y="274.6" font-size="3.2" fill="#e8e000" text-anchor="start">▪</text><text x="38.6" y="274.6" font-size="3.2" fill="#e8e000" text-anchor="start">▪</text><text x="39.4" y="259" font-size="2.8" fill="#e8e000" text-anchor="start">▪▪</text><text x="39.4" y="288.8" font-size="2.8" fill="#e8e000" text-anchor="start">▪▪</text><path d="M50.5 299.8 L112.6 299.8" stroke="#e8e000" stroke-width="0.9" fill="none"/><path d="M50.5 298.6 L50.5 301" stroke="#e8e000" stroke-width="0.8" fill="none"/><path d="M112.6 298.6 L112.6 301" stroke="#e8e000" stroke-width="0.8" fill="none"/><path d="M59.8 300.6 L67.8 300.6" stroke="#e8e000" stroke-width="0.8" fill="none"/><path d="M76.8 300.6 L85.8 300.6" stroke="#e8e000" stroke-width="0.8" fill="none"/><path d="M94.8 300.6 L103.8 300.6" stroke="#e8e000" stroke-width="0.8" fill="none"/><path d="M108.4 287.8 A3.4 3.4 0 0 1 113.2 283.6" stroke="#e8e000" stroke-width="0.8" fill="none"/><path d="M113.4 288.2 L117.2 292.2" stroke="#e8e000" stroke-width="0.8" fill="none"/><text x="117" y="294.4" font-size="3.4" fill="#e8e000" text-anchor="start">A</text><text x="175.6" y="236.8" font-size="4.6" fill="#f4f4f4" text-anchor="start" font-style="italic">A大样</text><path d="M175.2 237.8 L185.4 237.8" stroke="#f4f4f4" stroke-width="0.6" fill="none"/><path d="M175.2 239 L185.4 239" stroke="#f4f4f4" stroke-width="0.8" fill="none"/><path d="M197.9 245.8 V275.8 Q197.9 283.6 190.2 283.6 H165.1" stroke="#d4d4d4" stroke-width="0.9" fill="none"/><path d="M187.8 245.8 L201.8 245.8" stroke="#d4d4d4" stroke-width="0.8" fill="none"/><path d="M165.1 274.2 L165.1 288.2" stroke="#d4d4d4" stroke-width="0.8" fill="none"/><path d="M192.8 243.8 L194.2 245.8 L193 246.8 L194.4 248.6" stroke="#f0f0f0" stroke-width="0.5" fill="none"/><path d="M163.2 280.2 L165.2 281.6 L164 282.6 L166.4 283.8" stroke="#f0f0f0" stroke-width="0.5" fill="none"/><path d="M192.5 246 L192.5 278.4 L166.2 278.4" stroke="#e00000" stroke-width="1" fill="none"/><path d="M175.2 258.1 L191.6 249.8" stroke="#e8e000" stroke-width="0.8" fill="none"/><path d="M175.2 258.1 L191.2 266.8" stroke="#e8e000" stroke-width="0.8" fill="none"/><path d="M175.2 258.1 L190.2 276" stroke="#e8e000" stroke-width="0.8" fill="none"/><path d="M175.2 258.1 L181.6 276" stroke="#e8e000" stroke-width="0.8" fill="none"/><path d="M175.2 258.1 L169 276" stroke="#e8e000" stroke-width="0.8" fill="none"/><circle cx="191.6" cy="249.8" r="1.25" stroke="#ff2000" stroke-width="0" fill="#ff2000"/><circle cx="191.2" cy="266.8" r="1.25" stroke="#ff2000" stroke-width="0" fill="#ff2000"/><circle cx="190.2" cy="276" r="1.25" stroke="#ff2000" stroke-width="0" fill="#ff2000"/><circle cx="181.6" cy="276" r="1.25" stroke="#ff2000" stroke-width="0" fill="#ff2000"/><circle cx="169" cy="276" r="1.25" stroke="#ff2000" stroke-width="0" fill="#ff2000"/><circle cx="175.2" cy="258.1" r="2.1" stroke="#e8e000" stroke-width="0.8" fill="#000"/><path d="M192.5 256.8 L199 256.8" stroke="#e8e000" stroke-width="0.8" fill="none"/><circle cx="201.2" cy="256.8" r="2" stroke="#e8e000" stroke-width="0.8" fill="none"/><circle cx="201.2" cy="256.8" r="0.8" stroke="#e8e000" stroke-width="0.5" fill="none"/><path d="M192.6 263.2 L192.6 261.8 L197.8 261.8 L197.8 263.2" stroke="#e8e000" stroke-width="0.7" fill="none"/><text x="193.6" y="261.6" font-size="2.8" fill="#e8e000" text-anchor="start">▪▪</text><path d="M192.6 272.2 L192.6 270.8 L197.8 270.8 L197.8 272.2" stroke="#e8e000" stroke-width="0.7" fill="none"/><text x="193.6" y="270.6" font-size="2.8" fill="#e8e000" text-anchor="start">▪▪</text><path d="M177.4 276.2 L177.4 284.2" stroke="#e8e000" stroke-width="0.8" fill="none"/><path d="M185.4 276.2 L185.4 284.2" stroke="#e8e000" stroke-width="0.8" fill="none"/><path d="M171.8 284 L188.8 284" stroke="#e8e000" stroke-width="0.7" fill="none"/><text x="175" y="281.8" font-size="3" fill="#e8e000" text-anchor="start">▪</text><text x="183" y="281.8" font-size="3" fill="#e8e000" text-anchor="start">▪</text><path d="M240.8 29.7 Q243.4 51.2 244.4 74.2" stroke="#e00000" stroke-width="1" fill="none"/><path d="M235.8 26.4 L247.8 26.4" stroke="#e8e000" stroke-width="0.9" fill="none"/><path d="M241.8 23.8 L241.8 29.8" stroke="#e8e000" stroke-width="0.9" fill="none"/><path d="M237.8 77 L248.8 77" stroke="#e8e000" stroke-width="0.9" fill="none"/><path d="M244.2 74.2 L244.2 79.2" stroke="#e8e000" stroke-width="0.9" fill="none"/><path d="M239.8 31.2 L236.4 31.2 L236.4 42.4 L240.2 42.4" stroke="#e8e000" stroke-width="0.8" fill="none"/><text x="234" y="37.8" font-size="3" fill="#e8e000" text-anchor="start">▪</text><path d="M241.6 60.4 L238.2 60.4 L238.2 72.2 L241.8 72.2" stroke="#e8e000" stroke-width="0.8" fill="none"/><text x="235.8" y="67.4" font-size="3" fill="#e8e000" text-anchor="start">▪</text><text x="242.4" y="37.8" font-size="2.8" fill="#e8e000" text-anchor="start">▪</text><text x="244" y="56.2" font-size="2.8" fill="#f08000" text-anchor="start">▪</text><text x="244.8" y="67.2" font-size="2.8" fill="#e8e000" text-anchor="start">▪</text><path d="M242.2 49.8 L244.2 52.6" stroke="#d0d0d0" stroke-width="0.9" fill="none"/><path d="M243.2 46.6 L247.4 42.2" stroke="#e8e000" stroke-width="0.8" fill="none"/><text x="248" y="45.2" font-size="4.6" fill="#e8e000" text-anchor="start" font-weight="bold">N1</text><circle cx="255.4" cy="43.3" r="2.1" stroke="#e8e000" stroke-width="0.8" fill="none"/><circle cx="255.4" cy="43.3" r="0.8" stroke="#e8e000" stroke-width="0.5" fill="none"/><path d="M251.2 72.8 L305.8 72.8" stroke="#e00000" stroke-width="1" fill="none"/><circle cx="251.4" cy="72.8" r="0.7" stroke="#e00000" stroke-width="0" fill="#e00000"/><text x="263.8" y="72.2" font-size="2.8" fill="#e8e000" text-anchor="start">▬▪</text><path d="M281.8 72.8 L286.4 68.6" stroke="#e8e000" stroke-width="0.8" fill="none"/><text x="286.8" y="70.8" font-size="4.6" fill="#e8e000" text-anchor="start" font-weight="bold">N1</text><circle cx="294.2" cy="68.9" r="2.1" stroke="#e8e000" stroke-width="0.8" fill="none"/><circle cx="294.2" cy="68.9" r="0.8" stroke="#e8e000" stroke-width="0.5" fill="none"/><rect x="234.1" y="94.8" width="17.6" height="31.7" stroke="#e00000" stroke-width="1" fill="none"/><rect x="261.5" y="94.8" width="25.6" height="31.7" stroke="#e00000" stroke-width="1" fill="none"/><path d="M234.4 95.2 L242.6 101.6" stroke="#e8e000" stroke-width="1" fill="none"/><path d="M234.4 126.2 L241.8 119.2" stroke="#e8e000" stroke-width="1" fill="none"/><path d="M247.8 94.8 L252.2 90.6" stroke="#e8e000" stroke-width="0.8" fill="none"/><text x="252.6" y="93.2" font-size="4.6" fill="#e8e000" text-anchor="start" font-weight="bold">N1</text><circle cx="260" cy="91.3" r="2.1" stroke="#e8e000" stroke-width="0.8" fill="none"/><circle cx="260" cy="91.3" r="0.8" stroke="#e8e000" stroke-width="0.5" fill="none"/><path d="M280.8 94.8 L285.4 90.6" stroke="#e8e000" stroke-width="0.8" fill="none"/><text x="285.8" y="93.2" font-size="4.6" fill="#e8e000" text-anchor="start" font-weight="bold">N1</text><circle cx="293.2" cy="91.3" r="2.1" stroke="#e8e000" stroke-width="0.8" fill="none"/><circle cx="293.2" cy="91.3" r="0.8" stroke="#e8e000" stroke-width="0.5" fill="none"/><text x="240.2" y="94.4" font-size="2.6" fill="#e8e000" text-anchor="start">▬▪</text><text x="240.2" y="129.4" font-size="2.6" fill="#e8e000" text-anchor="start">▬▪</text><text x="271.4" y="94.4" font-size="2.6" fill="#e8e000" text-anchor="start">▬▪</text><text x="271.4" y="129.4" font-size="2.6" fill="#e8e000" text-anchor="start">▬▪</text><text x="231.6" y="112.2" font-size="3.4" fill="#e8e000" text-anchor="start">▮</text><text x="251.4" y="112.2" font-size="3.4" fill="#e8e000" text-anchor="start">▮</text><text x="259" y="112.2" font-size="3.4" fill="#e8e000" text-anchor="start">▮</text><text x="286.6" y="112.2" font-size="3.4" fill="#e8e000" text-anchor="start">▮</text><text x="272.8" y="182.8" font-size="3.9" fill="#f0f0f0" text-anchor="start" font-weight="bold">一个桥墩墩身材料数量表</text><path d="M272.4 183.7 L305.8 183.7" stroke="#f0f0f0" stroke-width="0.7" fill="none"/><rect x="252.2" y="186.2" width="54.6" height="34.5" stroke="#d81818" stroke-width="1" fill="none"/><path d="M252.2 195.2 L306.8 195.2" stroke="#b01010" stroke-width="0.7" fill="none"/><path d="M252.2 200.7 L306.8 200.7" stroke="#b01010" stroke-width="0.7" fill="none"/><path d="M252.2 206.2 L306.8 206.2" stroke="#b01010" stroke-width="0.7" fill="none"/><path d="M252.2 210.7 L306.8 210.7" stroke="#b01010" stroke-width="0.7" fill="none"/><path d="M252.2 215.7 L306.8 215.7" stroke="#b01010" stroke-width="0.7" fill="none"/><path d="M259 186.2 L259 220.7" stroke="#b01010" stroke-width="0.7" fill="none"/><path d="M271.4 186.2 L271.4 220.7" stroke="#b01010" stroke-width="0.7" fill="none"/><path d="M280.8 186.2 L280.8 220.7" stroke="#b01010" stroke-width="0.7" fill="none"/><path d="M292.1 186.2 L292.1 220.7" stroke="#b01010" stroke-width="0.7" fill="none"/><text x="266.6" y="240.6" font-size="3.9" fill="#f0f0f0" text-anchor="start" font-weight="bold">合桥墩身钢筋数量总计表</text><path d="M266.2 241.5 L305.6 241.5" stroke="#f0f0f0" stroke-width="0.7" fill="none"/><rect x="256.4" y="243.2" width="50.4" height="19.2" stroke="#d81818" stroke-width="1" fill="none"/><path d="M256.4 252.7 L306.8 252.7" stroke="#b01010" stroke-width="0.7" fill="none"/><path d="M256.4 257.6 L306.8 257.6" stroke="#b01010" stroke-width="0.7" fill="none"/><path d="M263.3 243.2 L263.3 262.4" stroke="#b01010" stroke-width="0.7" fill="none"/><path d="M272.8 243.2 L272.8 262.4" stroke="#b01010" stroke-width="0.7" fill="none"/><path d="M284.6 243.2 L284.6 262.4" stroke="#b01010" stroke-width="0.7" fill="none"/><path d="M296.3 243.2 L296.3 262.4" stroke="#b01010" stroke-width="0.7" fill="none"/><text x="253.4" y="190.8" font-size="2.9" fill="#f0f0f0" text-anchor="start" font-weight="bold">编号</text><text x="260.4" y="190.8" font-size="2.9" fill="#f0f0f0" text-anchor="start" font-weight="bold">直径</text><text x="272.8" y="190.8" font-size="2.9" fill="#f0f0f0" text-anchor="start" font-weight="bold">单根长</text><text x="282.8" y="190.8" font-size="2.9" fill="#f0f0f0" text-anchor="start" font-weight="bold">根数</text><text x="293.8" y="190.8" font-size="2.9" fill="#f0f0f0" text-anchor="start" font-weight="bold">共长</text><text x="260.8" y="194.2" font-size="2.4" fill="#e0e0e0" text-anchor="start">(mm)</text><text x="273.2" y="194.2" font-size="2.4" fill="#e0e0e0" text-anchor="start">(cm)</text><text x="294.4" y="194.2" font-size="2.4" fill="#e0e0e0" text-anchor="start">(m)</text><text x="254.6" y="199" font-size="2.7" fill="#ececec" text-anchor="start">1</text><text x="262.4" y="199" font-size="2.7" fill="#ececec" text-anchor="start">Φ20</text><text x="273.4" y="199" font-size="2.7" fill="#ececec" text-anchor="start">3746</text><text x="283" y="199" font-size="2.7" fill="#ececec" text-anchor="start">176</text><text x="293.6" y="199" font-size="2.7" fill="#ececec" text-anchor="start">6592.9</text><text x="254.6" y="204.6" font-size="2.7" fill="#ececec" text-anchor="start">2</text><text x="262.4" y="204.6" font-size="2.7" fill="#ececec" text-anchor="start"></text><text x="273.4" y="204.6" font-size="2.7" fill="#ececec" text-anchor="start">782</text><text x="283" y="204.6" font-size="2.7" fill="#ececec" text-anchor="start">1176</text><text x="293.6" y="204.6" font-size="2.7" fill="#ececec" text-anchor="start">9196.3</text><text x="254.6" y="209.4" font-size="2.7" fill="#ececec" text-anchor="start">3</text><text x="262.4" y="209.4" font-size="2.7" fill="#ececec" text-anchor="start">Φ12</text><text x="273.4" y="209.4" font-size="2.7" fill="#ececec" text-anchor="start">757</text><text x="283" y="209.4" font-size="2.7" fill="#ececec" text-anchor="start">2238</text><text x="293.6" y="209.4" font-size="2.7" fill="#ececec" text-anchor="start">1794.6</text><text x="254.6" y="214.2" font-size="2.7" fill="#ececec" text-anchor="start">4</text><text x="262.4" y="214.2" font-size="2.7" fill="#ececec" text-anchor="start"></text><text x="273.4" y="214.2" font-size="2.7" fill="#ececec" text-anchor="start">266</text><text x="283" y="214.2" font-size="2.7" fill="#ececec" text-anchor="start">3760</text><text x="293.6" y="214.2" font-size="2.7" fill="#ececec" text-anchor="start">2791.3</text><text x="258.8" y="219.6" font-size="2.7" fill="#ececec" text-anchor="start">C30混凝土(m3)</text><text x="257.6" y="247.6" font-size="2.9" fill="#f0f0f0" text-anchor="start" font-weight="bold">编号</text><text x="265.4" y="247.6" font-size="2.9" fill="#f0f0f0" text-anchor="start" font-weight="bold">直径</text><text x="275.4" y="247.6" font-size="2.9" fill="#f0f0f0" text-anchor="start" font-weight="bold">总长</text><text x="286.4" y="247.6" font-size="2.9" fill="#f0f0f0" text-anchor="start" font-weight="bold">单位重</text><text x="298.2" y="247.6" font-size="2.9" fill="#f0f0f0" text-anchor="start" font-weight="bold">总重</text><text x="265.2" y="251.4" font-size="2.4" fill="#e0e0e0" text-anchor="start">(mm)</text><text x="275.8" y="251.4" font-size="2.4" fill="#e0e0e0" text-anchor="start">(m)</text><text x="286.2" y="251.4" font-size="2.4" fill="#e0e0e0" text-anchor="start">(kg/m)</text><text x="298.4" y="251.4" font-size="2.4" fill="#e0e0e0" text-anchor="start">(kg)</text><text x="259" y="256.2" font-size="2.7" fill="#ececec" text-anchor="start">1</text><text x="265.8" y="256.2" font-size="2.7" fill="#ececec" text-anchor="start">Φ20</text><text x="274.2" y="256.2" font-size="2.7" fill="#ececec" text-anchor="start">6592.9</text><text x="286.6" y="256.2" font-size="2.7" fill="#ececec" text-anchor="start">2.466</text><text x="297.8" y="256.2" font-size="2.7" fill="#ececec" text-anchor="start">16258</text><text x="259" y="261" font-size="2.7" fill="#ececec" text-anchor="start">2</text><text x="265.8" y="261" font-size="2.7" fill="#ececec" text-anchor="start">Φ12</text><text x="274.2" y="261" font-size="2.7" fill="#ececec" text-anchor="start">13782.2</text><text x="286.6" y="261" font-size="2.7" fill="#ececec" text-anchor="start">0.888</text><text x="297.8" y="261" font-size="2.7" fill="#ececec" text-anchor="start">12239</text><rect x="7.4" y="338.4" width="7.4" height="7.4" stroke="#e6e6e6" stroke-width="0.8" fill="none"/><path d="M11.2 338.4 L11.2 308.2" stroke="#e6e6e6" stroke-width="0.8" fill="none"/><path d="M7.6 308.2 L11.2 300 L14.8 308.2 Z" stroke="#e6e6e6" stroke-width="0.8" fill="none"/><path d="M14.8 342 L44.8 342" stroke="#e6e6e6" stroke-width="0.8" fill="none"/><path d="M44.8 338.6 L53.2 342 L44.8 345.4 Z" stroke="#e6e6e6" stroke-width="0.8" fill="none"/><path d="M8.6 285 L12.4 289.4 L16.2 285" stroke="#e6e6e6" stroke-width="0.8" fill="none"/><path d="M12.4 289.4 L12.4 293.8" stroke="#e6e6e6" stroke-width="0.8" fill="none"/><path d="M60.4 338 L67.6 346.2" stroke="#e6e6e6" stroke-width="0.8" fill="none"/><path d="M67.6 338 L60.4 346.2" stroke="#e6e6e6" stroke-width="0.8" fill="none"/><path d="M88.4 1.2 L88.4 10.2 L90.6 8.2 L92 11.6 L93.2 11 L91.8 7.8 L94.6 7.6 Z" stroke="#111" stroke-width="0.5" fill="#fff"/></svg>
<!-- sec_dialog -->
<div style="left:335.2px;top:85.2px;width:245.8px;height:331.8px;background:#f0f0f0;border-radius:2.2px 2.2px 0 0;"></div>
<div style="left:335.2px;top:85.2px;width:245.8px;height:13.4px;border-radius:2.2px 2.2px 0 0;background:linear-gradient(90deg,#3b80cc 0,#3778c4 20px,#2c5c9e 65px,#2a5a98 90px,#48699a 108px,#4a6884 130px,#5a7888 155px,#3a5272 166px,#284062 175px,#1e3252 200px,#22385a 225px,#1c3050 246px);"></div>
<div style="left:335.2px;top:85.2px;width:245.8px;height:13.4px;border-radius:2.2px 2.2px 0 0;background:linear-gradient(180deg,rgba(190,220,240,.7) 0,rgba(190,220,240,.25) 1.2px,rgba(255,255,255,.04) 4px,rgba(0,0,0,.05) 9px,rgba(50,130,225,.85) 10.6px,rgba(60,140,230,.95) 13.4px);"></div>
<div style="left:335.2px;top:87.2px;width:1.9px;height:329.8px;background:linear-gradient(90deg,#5aa8e8,#2f88e0);"></div>
<div style="left:579.1px;top:87.2px;width:1.9px;height:329.8px;background:linear-gradient(90deg,#2f88e0,#5aa8e8);"></div>
<div style="left:335.2px;top:414.8px;width:245.8px;height:2.2px;background:linear-gradient(#2f90e8,#2068b8);"></div>
<svg style="left:337.4px;top:87.6px" width="8.6" height="8.6" viewBox="0 0 8.6 8.6"><rect x="0.3" y="0.3" width="8" height="8" fill="#dfe8f4" stroke="#c82020" stroke-width="0.6"/><rect x="1.4" y="1.6" width="4" height="3" fill="#3a66b8"/><rect x="3.2" y="3.8" width="4" height="3.4" fill="#9ab4dc" stroke="#2a4a9a" stroke-width="0.4"/></svg>
<span class="t" style="left:347.2px;top:89.2px;font-size:6.5px;line-height:6.5px;color:#fff;font-weight:500;text-shadow:0 0 1.6px rgba(20,40,80,.9);letter-spacing:-0.2px;">矩形桥墩钢筋构造【3.ice】</span>
<div style="left:542.4px;top:86px;width:13.6px;height:8.8px;background:linear-gradient(#eef2f7,#cbd6e2 46%,#acbbcd 52%,#c9d4e1);border:1px solid #5c6c80;border-radius:0 0 0 2px;"></div>
<span class="t" style="left:546.6px;top:86.3px;font-size:7.6px;line-height:7.6px;color:#fbfcfd;font-weight:bold;text-shadow:0 0 0.8px #3c4856,0 0 0.8px #3c4856,0 0 1px #3c4856;">?</span>
<div style="left:556px;top:86px;width:23px;height:8.8px;background:linear-gradient(#eeb0a2,#d86a56 45%,#c23c28 52%,#d8705a);border:1px solid #6a2a20;border-radius:0 0 2px 0;"></div>
<span class="t" style="left:563.2px;top:85.6px;font-size:8.4px;line-height:8.4px;color:#fff;font-weight:bold;text-shadow:0 0 0.8px #4a1a14,0 0 0.8px #4a1a14,0 0 1px #4a1a14;">✕</span>
<div style="left:344.4px;top:108.2px;width:38.6px;height:10.6px;background:linear-gradient(#f5f5f5,#ebebeb 48%,#dcdcdc 52%,#cfcfcf);border:1px solid #9a9a9a;border-radius:1.6px;box-shadow:inset 0 0 0 0.6px #fbfbfb;"></div>
<span class="t" style="left:351.7px;top:110.4px;font-size:6px;line-height:6px;color:#101010;font-weight:500;">项目文件</span>
<div style="left:389.6px;top:107.6px;width:142.8px;height:11.8px;background:#fdfdfd;border:1px solid #b4b8c2;"></div>
<span class="t" style="left:392px;top:110.9px;font-size:7px;line-height:7px;color:#303030;font-family:'Liberation Mono',monospace;letter-spacing:-0.97px;">D:\ICSTProject\YRTools\YRTools2007\Debug\3.:</span>
<div style="left:539.6px;top:107.6px;width:35.2px;height:11.8px;background:#fdfdfd;border:1px solid #9aa0a8;"></div>
<span class="t" style="left:541.6px;top:110.9px;font-size:7px;line-height:7px;color:#2a2a2a;font-family:'Liberation Mono',monospace;letter-spacing:-1.05px;">50</span>
<svg style="left:567.4px;top:112.4px" width="4.4" height="2.8" viewBox="0 0 4.4 2.8"><path d="M0 0 H4.4 L2.2 2.6Z" fill="#1a1a70"/></svg>
<div style="left:343.9px;top:135.8px;width:188.2px;height:272.8px;background:#fcfcfc;border:1px solid #b9bdc4;"></div>
<div style="left:376px;top:126.8px;width:30.3px;height:9.4px;background:linear-gradient(#f4f4f4,#e9e9e9 50%,#dcdcdc);border:1px solid #a8acb4;border-bottom:none;"></div>
<span class="t" style="left:378.45px;top:128.7px;font-size:6.4px;line-height:6.4px;color:#1a1a1a;font-weight:500;">桥墩高度</span>
<div style="left:405.5px;top:126.8px;width:32.3px;height:9.4px;background:linear-gradient(#f4f4f4,#e9e9e9 50%,#dcdcdc);border:1px solid #a8acb4;border-bottom:none;"></div>
<span class="t" style="left:408.95px;top:128.7px;font-size:6.4px;line-height:6.4px;color:#1a1a1a;font-weight:500;">钢筋参数</span>
<div style="left:437px;top:126.8px;width:44.5px;height:9.4px;background:linear-gradient(#f4f4f4,#e9e9e9 50%,#dcdcdc);border:1px solid #a8acb4;border-bottom:none;"></div>
<span class="t" style="left:440.15px;top:128.7px;font-size:6.4px;line-height:6.4px;color:#1a1a1a;font-weight:500;">钢筋网及箍筋</span>
<div style="left:480.7px;top:126.8px;width:32.7px;height:9.4px;background:linear-gradient(#f4f4f4,#e9e9e9 50%,#dcdcdc);border:1px solid #a8acb4;border-bottom:none;"></div>
<span class="t" style="left:484.35px;top:128.7px;font-size:6.4px;line-height:6.4px;color:#1a1a1a;font-weight:500;">加密规则</span>
<div style="left:343.9px;top:124.8px;width:32.6px;height:11.8px;background:#fcfcfc;border:1px solid #a8acb4;border-bottom:none;"></div>
<span class="t" style="left:347.6px;top:127.2px;font-size:6.3px;line-height:6.3px;color:#101010;font-weight:500;">构造尺寸</span>
<div class="grp" style="left:351.5px;top:145.2px;width:171.2px;height:38px;"></div>
<div style="left:354.4px;top:142.2px;width:19.5px;height:6px;background:#fcfcfc;"></div>
<span class="t" style="left:355px;top:141.9px;font-size:6.3px;line-height:6.3px;color:#161616;font-weight:500;">基本：</span>
<div class="grp" style="left:351.5px;top:194.4px;width:171.2px;height:64.2px;"></div>
<div style="left:354.4px;top:191.4px;width:32.1px;height:6px;background:#fcfcfc;"></div>
<span class="t" style="left:355px;top:191.1px;font-size:6.3px;line-height:6.3px;color:#161616;font-weight:500;">横向开槽：</span>
<div class="grp" style="left:351.5px;top:271.5px;width:171.2px;height:64px;"></div>
<div style="left:354.4px;top:268.5px;width:32.1px;height:6px;background:#fcfcfc;"></div>
<span class="t" style="left:355px;top:268.2px;font-size:6.3px;line-height:6.3px;color:#161616;font-weight:500;">纵向开槽：</span>
<div class="grp" style="left:351.5px;top:346.4px;width:171.2px;height:56.6px;"></div>
<div style="left:354.4px;top:343.4px;width:19.5px;height:6px;background:#fcfcfc;"></div>
<span class="t" style="left:355px;top:343.1px;font-size:6.3px;line-height:6.3px;color:#161616;font-weight:500;">提示：</span>
<span class="t" style="left:356.8px;top:154.6px;font-size:6.3px;line-height:6.3px;color:#161616;font-weight:500;">桥墩宽度：</span>
<div style="left:390px;top:153.2px;width:43.4px;height:9.6px;background:#ebebeb;border:1px solid #b4b8c2;"></div>
<span class="t" style="left:392px;top:155.8px;font-size:7px;line-height:7px;color:#444;font-family:'Liberation Mono',monospace;letter-spacing:-1.05px;">3.82</span>
<span class="t" style="left:441.6px;top:154.6px;font-size:6.3px;line-height:6.3px;color:#161616;font-weight:500;">桥墩厚度：</span>
<div style="left:474.8px;top:153.2px;width:43.4px;height:9.6px;background:#ebebeb;border:1px solid #b4b8c2;"></div>
<span class="t" style="left:476.8px;top:155.8px;font-size:7px;line-height:7px;color:#444;font-family:'Liberation Mono',monospace;letter-spacing:-1.05px;">2</span>
<span class="t" style="left:356.8px;top:169px;font-size:6.3px;line-height:6.3px;color:#161616;font-weight:500;">倒角参数：</span>
<div style="left:390px;top:167.6px;width:43.4px;height:9.6px;background:#ebebeb;border:1px solid #b4b8c2;"></div>
<span class="t" style="left:392px;top:170.2px;font-size:7px;line-height:7px;color:#444;font-family:'Liberation Mono',monospace;letter-spacing:-1.05px;">0.1</span>
<span class="t" style="left:441.6px;top:169px;font-size:6.3px;line-height:6.3px;color:#161616;font-weight:500;">桥墩倒角：</span>
<div style="left:474.8px;top:167.6px;width:43.8px;height:10px;background:#fdfdfd;border:1px solid #8d929b;"></div>
<span class="t" style="left:477.4px;top:169.1px;font-size:6.3px;line-height:6.3px;color:#101010;font-weight:500;">圆倒角</span>
<svg style="left:511.4px;top:171.4px" width="4.4" height="2.8" viewBox="0 0 4.4 2.8"><path d="M0 0 H4.4 L2.2 2.6Z" fill="#1a1a70"/></svg>
<span class="t" style="left:356.8px;top:203.6px;font-size:6.3px;line-height:6.3px;color:#161616;font-weight:500;">开槽个数：</span>
<div style="left:390px;top:202.2px;width:43.4px;height:9.6px;background:#ebebeb;border:1px solid #b4b8c2;"></div>
<span class="t" style="left:392px;top:204.8px;font-size:7px;line-height:7px;color:#444;font-family:'Liberation Mono',monospace;letter-spacing:-1.05px;">1</span>
<span class="t" style="left:441.6px;top:203.6px;font-size:6.3px;line-height:6.3px;color:#161616;font-weight:500;">开槽间距：</span>
<div style="left:474.8px;top:202.2px;width:43.4px;height:9.6px;background:#ebebeb;border:1px solid #b4b8c2;"></div>
<span class="t" style="left:476.8px;top:204.8px;font-size:7px;line-height:7px;color:#444;font-family:'Liberation Mono',monospace;letter-spacing:-1.05px;">1.5</span>
<span class="t" style="left:356.8px;top:217px;font-size:6.3px;line-height:6.3px;color:#161616;font-weight:500;">子槽个数：</span>
<div style="left:390px;top:215.6px;width:43.4px;height:9.6px;background:#ebebeb;border:1px solid #b4b8c2;"></div>
<span class="t" style="left:392px;top:218.2px;font-size:7px;line-height:7px;color:#444;font-family:'Liberation Mono',monospace;letter-spacing:-1.05px;">3</span>
<span class="t" style="left:441.6px;top:217px;font-size:6.3px;line-height:6.3px;color:#161616;font-weight:500;">子槽间距：</span>
<div style="left:474.8px;top:215.6px;width:43.4px;height:9.6px;background:#ebebeb;border:1px solid #b4b8c2;"></div>
<span class="t" style="left:476.8px;top:218.2px;font-size:7px;line-height:7px;color:#444;font-family:'Liberation Mono',monospace;letter-spacing:-1.05px;">0.18</span>
<span class="t" style="left:356.8px;top:231.1px;font-size:6.3px;line-height:6.3px;color:#161616;font-weight:500;">开槽深度：</span>
<div style="left:390px;top:229.7px;width:43.4px;height:9.6px;background:#ebebeb;border:1px solid #b4b8c2;"></div>
<span class="t" style="left:392px;top:232.3px;font-size:7px;line-height:7px;color:#444;font-family:'Liberation Mono',monospace;letter-spacing:-1.05px;">0.03</span>
<span class="t" style="left:441.6px;top:231.1px;font-size:6.3px;line-height:6.3px;color:#b4b4b4;font-weight:500;">开槽形式：</span>
<div style="left:474.8px;top:229.7px;width:43.4px;height:9.6px;background:#fdfdfd;border:1px solid #d4d6dc;"></div>
<span class="t" style="left:356.8px;top:245.5px;font-size:6.3px;line-height:6.3px;color:#161616;font-weight:500;">槽口宽度：</span>
<div style="left:390px;top:244.1px;width:43.4px;height:9.6px;background:#ebebeb;border:1px solid #b4b8c2;"></div>
<span class="t" style="left:392px;top:246.7px;font-size:7px;line-height:7px;color:#444;font-family:'Liberation Mono',monospace;letter-spacing:-1.05px;">0.06</span>
<span class="t" style="left:441.6px;top:245.5px;font-size:6.3px;line-height:6.3px;color:#161616;font-weight:500;">槽底宽度：</span>
<div style="left:474.8px;top:244.1px;width:43.4px;height:9.6px;background:#ebebeb;border:1px solid #b4b8c2;"></div>
<span class="t" style="left:476.8px;top:246.7px;font-size:7px;line-height:7px;color:#444;font-family:'Liberation Mono',monospace;letter-spacing:-1.05px;">0.06</span>
<span class="t" style="left:356.8px;top:280.7px;font-size:6.3px;line-height:6.3px;color:#161616;font-weight:500;">开槽个数：</span>
<div style="left:390px;top:279.3px;width:43.4px;height:9.6px;background:#ebebeb;border:1px solid #b4b8c2;"></div>
<span class="t" style="left:392px;top:281.9px;font-size:7px;line-height:7px;color:#444;font-family:'Liberation Mono',monospace;letter-spacing:-1.05px;">1</span>
<span class="t" style="left:441.6px;top:280.7px;font-size:6.3px;line-height:6.3px;color:#161616;font-weight:500;">开槽间距：</span>
<div style="left:474.8px;top:279.3px;width:43.4px;height:9.6px;background:#ebebeb;border:1px solid #b4b8c2;"></div>
<span class="t" style="left:476.8px;top:281.9px;font-size:7px;line-height:7px;color:#444;font-family:'Liberation Mono',monospace;letter-spacing:-1.05px;">1.5</span>
<span class="t" style="left:356.8px;top:294.1px;font-size:6.3px;line-height:6.3px;color:#161616;font-weight:500;">子槽个数：</span>
<div style="left:390px;top:292.7px;width:43.4px;height:9.6px;background:#ebebeb;border:1px solid #b4b8c2;"></div>
<span class="t" style="left:392px;top:295.3px;font-size:7px;line-height:7px;color:#444;font-family:'Liberation Mono',monospace;letter-spacing:-1.05px;">3</span>
<span class="t" style="left:441.6px;top:294.1px;font-size:6.3px;line-height:6.3px;color:#161616;font-weight:500;">子槽间距：</span>
<div style="left:474.8px;top:292.7px;width:43.4px;height:9.6px;background:#ebebeb;border:1px solid #b4b8c2;"></div>
<span class="t" style="left:476.8px;top:295.3px;font-size:7px;line-height:7px;color:#444;font-family:'Liberation Mono',monospace;letter-spacing:-1.05px;">0.18</span>
<span class="t" style="left:356.8px;top:308.2px;font-size:6.3px;line-height:6.3px;color:#161616;font-weight:500;">开槽深度：</span>
<div style="left:390px;top:306.8px;width:43.4px;height:9.6px;background:#ebebeb;border:1px solid #b4b8c2;"></div>
<span class="t" style="left:392px;top:309.4px;font-size:7px;line-height:7px;color:#444;font-family:'Liberation Mono',monospace;letter-spacing:-1.05px;">0.03</span>
<span class="t" style="left:441.6px;top:308.2px;font-size:6.3px;line-height:6.3px;color:#b4b4b4;font-weight:500;">开槽形式：</span>
<div style="left:474.8px;top:306.8px;width:43.4px;height:9.6px;background:#fdfdfd;border:1px solid #d4d6dc;"></div>
<span class="t" style="left:356.8px;top:322.6px;font-size:6.3px;line-height:6.3px;color:#161616;font-weight:500;">槽口宽度：</span>
<div style="left:390px;top:321.2px;width:43.4px;height:9.6px;background:#ebebeb;border:1px solid #b4b8c2;"></div>
<span class="t" style="left:392px;top:323.8px;font-size:7px;line-height:7px;color:#444;font-family:'Liberation Mono',monospace;letter-spacing:-1.05px;">0.06</span>
<span class="t" style="left:441.6px;top:322.6px;font-size:6.3px;line-height:6.3px;color:#161616;font-weight:500;">槽底宽度：</span>
<div style="left:474.8px;top:321.2px;width:43.4px;height:9.6px;background:#ebebeb;border:1px solid #b4b8c2;"></div>
<span class="t" style="left:476.8px;top:323.8px;font-size:7px;line-height:7px;color:#444;font-family:'Liberation Mono',monospace;letter-spacing:-1.05px;">0.06</span>
<svg style="left:357.4px;top:354.4px" width="17" height="18" viewBox="0 0 17 18"><g stroke="#f6e460" stroke-width="0.9" opacity="0.85"><path d="M8.4 0.4 V2.4 M3.4 2 L4.8 3.8 M13.4 2 L12 3.8 M1.2 6.4 H3.4 M13.4 6.4 H15.6"/></g><path d="M3.2 10.4 L8.4 16.4 L13.6 10.4 L11.4 9.4 L8.4 12.6 L5.4 9.4 Z" fill="#a6e2f0" stroke="#26405e" stroke-width="0.7"/><path d="M8.4 3 C11.8 3 12.8 6.2 11.2 8.4 L9.8 11.4 H7 L5.6 8.4 C4 6.2 5 3 8.4 3Z" fill="#fbee1a" stroke="#8a7a10" stroke-width="0.5"/><path d="M8.4 4.6 V8.2 M8.4 9.2 V10.2" stroke="#1a1a1a" stroke-width="1.1"/><rect x="7.2" y="11.2" width="2.4" height="1.6" fill="#4a5a70"/></svg>
<span class="t" style="left:391.6px;top:352px;font-size:6.15px;line-height:6.15px;color:#161616;letter-spacing:0.25px;">1、如果不需要开槽，则将相应的开槽个数输</span>
<span class="t" style="left:380.5px;top:358.25px;font-size:6.15px;line-height:6.15px;color:#161616;letter-spacing:0.25px;">入1即可；</span>
<span class="t" style="left:391.6px;top:364.5px;font-size:6.15px;line-height:6.15px;color:#161616;letter-spacing:0.25px;">2、平面图上，箍筋必须对称布置，圆倒角情</span>
<span class="t" style="left:380.5px;top:370.75px;font-size:6.15px;line-height:6.15px;color:#161616;letter-spacing:0.25px;">况下，角点处主筋不计入列号；</span>
<span class="t" style="left:391.6px;top:377px;font-size:6.15px;line-height:6.15px;color:#161616;letter-spacing:0.25px;">3、混凝土标号固定为C30。</span>
<div style="left:540.8px;top:134.8px;width:32.6px;height:11.2px;background:linear-gradient(#f5f5f5,#ebebeb 48%,#dcdcdc 52%,#cfcfcf);border:1px solid #5a9ad0;border-radius:1.6px;box-shadow:inset 0 0 0 0.8px #8fd0f0;"></div>
<span class="t" style="left:551.1px;top:137.3px;font-size:6px;line-height:6px;color:#101010;font-weight:500;">确定</span>
<div style="left:540.8px;top:153.3px;width:32.6px;height:11.8px;background:linear-gradient(#f5f5f5,#ebebeb 48%,#dcdcdc 52%,#cfcfcf);border:1px solid #9a9a9a;border-radius:1.6px;box-shadow:inset 0 0 0 0.6px #fbfbfb;"></div>
<span class="t" style="left:551.1px;top:156.1px;font-size:6px;line-height:6px;color:#101010;font-weight:500;">取消</span>
<div style="left:533.6px;top:365.8px;width:6.4px;height:6.4px;background:linear-gradient(135deg,#dcdcdc,#fdfdfd);border:1px solid #8a8e96;"></div>
<span class="t" style="left:542px;top:366px;font-size:6.2px;line-height:6.2px;color:#101010;font-weight:500;">显示配筋率</span>
<div style="left:540.6px;top:382.3px;width:33.8px;height:11px;background:linear-gradient(#f5f5f5,#ebebeb 48%,#dcdcdc 52%,#cfcfcf);border:1px solid #9a9a9a;border-radius:1.6px;box-shadow:inset 0 0 0 0.6px #fbfbfb;"></div>
<span class="t" style="left:551.5px;top:384.7px;font-size:6px;line-height:6px;color:#101010;font-weight:500;">隐藏</span>
<!-- sec_bottom -->
<div style="left:30.2px;top:424.2px;width:569px;height:8.2px;background:#eef0f4;"></div>
<div style="left:3px;top:432.4px;width:609.4px;height:2.6px;background:#eef1f6;"></div>
<div style="left:30.8px;top:424.6px;width:7.4px;height:7.4px;background:#f6f7f9;border:1px solid #b4bac4;"></div>
<div style="left:38.2px;top:424.6px;width:7.4px;height:7.4px;background:#f6f7f9;border:1px solid #b4bac4;"></div>
<div style="left:45.6px;top:424.6px;width:7.4px;height:7.4px;background:#f6f7f9;border:1px solid #b4bac4;"></div>
<div style="left:53px;top:424.6px;width:7.4px;height:7.4px;background:#f6f7f9;border:1px solid #b4bac4;"></div>
<svg style="left:30.8px;top:424.6px" width="30" height="7.4" viewBox="0 0 30 7.4"><g fill="#9aa2b0"><path d="M2 1.6 h0.9 v4.2 h-0.9z M5.8 1.6 v4.2 l-2.6 -2.1z"/><path d="M12.6 1.6 v4.2 l-2.8 -2.1z"/><path d="M17.4 1.6 v4.2 l2.8 -2.1z"/><path d="M24 1.6 v4.2 l2.6 -2.1z M27 1.6 h0.9 v4.2 h-0.9z"/></g></svg>
<svg style="left:60px;top:424.2px" width="80" height="8.4" viewBox="0 0 80 8.4"><path d="M0.6 0 H23.6 L21 8 H3.6 Z" fill="#000"/><path d="M25.4 8 L28.4 0.4 M47.6 8 L50.6 0.4 M71.6 8 L74.6 0.4" stroke="#50545c" stroke-width="0.7"/><path d="M24 8.1 H72" stroke="#8a8e96" stroke-width="0.5"/></svg>
<span class="t" style="left:66px;top:425.4px;font-size:6.2px;line-height:6.2px;color:#fff;font-weight:bold;">模型</span>
<span class="t" style="left:89px;top:425.4px;font-size:6px;line-height:6px;color:#202020;">布局1</span>
<span class="t" style="left:111.6px;top:425.4px;font-size:6px;line-height:6px;color:#202020;">布局2</span>
<div style="left:2.6px;top:435px;width:610px;height:1px;background:#b9bcc2;"></div>
<div style="left:2.6px;top:436px;width:610px;height:5.2px;background:#f7f8fa;"></div>
<div style="left:2.6px;top:441.2px;width:610px;height:1.1px;background:#6e7076;"></div>
<div style="left:2.6px;top:442.3px;width:8px;height:57.7px;background:#f1f2f5;"></div>
<div style="left:5.8px;top:443px;width:0.9px;height:55px;background:#b0b4bc;"></div>
<div style="left:7.6px;top:443px;width:0.9px;height:55px;background:#b0b4bc;"></div>
<div style="left:10px;top:442px;width:590.6px;height:58px;background:#c6ecc9;border-left:1.2px solid #5c5f64;"></div>
<span class="t cj" style="left:11.8px;top:442.4px;">命令</span><span class="t la" style="left:28.92px;top:442.64px;">: aa </span><span class="t cj" style="left:50.32px;top:442.4px;">功能命令一览表（</span><span class="t la" style="left:118.8px;top:442.64px;">ICST</span><span class="t cj" style="left:135.92px;top:442.4px;">版权所有，版本特征码坚</span><span class="t la" style="left:230.08px;top:442.64px;">WYRTYR</span><span class="t cj" style="left:255.76px;top:442.4px;">）</span>
<span class="t cj" style="left:11.8px;top:449.4px;">柱式墩一般构造</span><span class="t la" style="left:71.72px;top:449.64px;">: ZDYBGZ</span>
<span class="t cj" style="left:11.8px;top:456.4px;">肋板台一般构造</span><span class="t la" style="left:71.72px;top:456.64px;">: LTYBGZ</span>
<span class="t cj" style="left:11.8px;top:463.4px;">矩形墩钢筋构造</span><span class="t la" style="left:71.72px;top:463.64px;">: JXDTGJ</span>
<span class="t cj" style="left:11.8px;top:470.4px;">工形承台钢筋构造</span><span class="t la" style="left:80.28px;top:470.64px;">: CTGJGZ</span>
<span class="t cj" style="left:11.8px;top:477.4px;">预制梁平面布置</span><span class="t la" style="left:71.72px;top:477.64px;">: LBX</span>
<span class="t cj" style="left:11.8px;top:484.4px;">请选择命令模式</span><span class="t la" style="left:71.72px;top:484.64px;">[</span><span class="t cj" style="left:76px;top:484.4px;">桩墩般构</span><span class="t la" style="left:110.24px;top:484.64px;">(1)/</span><span class="t cj" style="left:127.36px;top:484.4px;">肋台般构</span><span class="t la" style="left:161.6px;top:484.64px;">(2)/</span><span class="t cj" style="left:178.72px;top:484.4px;">矩墩钢筋</span><span class="t la" style="left:212.96px;top:484.64px;">(3)/</span><span class="t cj" style="left:230.08px;top:484.4px;">工形承台</span><span class="t la" style="left:264.32px;top:484.64px;">(4)/</span><span class="t cj" style="left:281.44px;top:484.4px;">布梁图</span><span class="t la" style="left:307.12px;top:484.64px;">(5)]:3</span>
<div style="left:600.6px;top:442.3px;width:9.8px;height:49.4px;background:#f2f3f5;border-left:1px solid #e2e4e8;"></div>
<div style="left:610.4px;top:442.3px;width:2px;height:57.7px;background:#f1f2f5;"></div>
<div style="left:564.3px;top:491.6px;width:36.3px;height:8.4px;background:#f2f3f5;border-top:1px solid #d8dade;"></div>
<div style="left:600.6px;top:491.6px;width:9.8px;height:8.4px;background:#f1f2f5;"></div>
<div style="left:300px;top:491.4px;width:264.3px;height:0.8px;background:rgba(120,150,125,.38);"></div>
<div style="left:601.6px;top:474px;width:8px;height:7.8px;background:linear-gradient(90deg,#fafafa,#e4e6ea);border:1px solid #a4a8b0;border-radius:1px;"></div>
<div style="left:574px;top:492.8px;width:8.8px;height:6.6px;background:linear-gradient(#fafafa,#e4e6ea);border:1px solid #a4a8b0;border-radius:1px;"></div>
<svg style="left:601.6px;top:443.4px" width="8" height="48" viewBox="0 0 8 48"><path d="M4 2.2 L6.2 4.8 H1.8Z M4 45.8 L6.2 43.2 H1.8Z" fill="#6c7078"/></svg>
<svg style="left:564.6px;top:492.6px" width="36" height="7" viewBox="0 0 36 7"><path d="M3.4 3.5 L5.8 1.6 V5.4Z M32.6 3.5 L30.2 1.6 V5.4Z" fill="#6c7078"/></svg>
<div style="left:0px;top:500px;width:615px;height:15px;background:linear-gradient(#f3f4f7,#e9ecf1);border-top:1px solid #cfd3da;"></div>
<div style="left:0px;top:500px;width:3px;height:15px;background:linear-gradient(90deg,#6cbfe0 0,#9ad2ec 1.1px,#e2eef8 1.6px,#ecf2f9 3px);"></div>
<div style="left:2.6px;top:502.6px;width:113.6px;height:10.6px;background:#fbfbfc;border:1px solid #b4b8c0;"></div>
<span class="t" style="left:4.8px;top:504.9px;font-size:6.6px;line-height:6.6px;color:#2c2c2c;letter-spacing:0.18px;">1405.3698, -2439.9978, 0.0000</span>
<span class="t" style="left:119.75px;top:505.2px;font-size:6.2px;line-height:6.2px;color:#1a1a1a;font-weight:bold;">捕捉</span>
<span class="t" style="left:136.95px;top:505.2px;font-size:6.2px;line-height:6.2px;color:#1a1a1a;font-weight:bold;">栅格</span>
<div style="left:153px;top:502.6px;width:15px;height:10.6px;background:#fdfdfd;border:1px solid #5c6068;"></div>
<span class="t" style="left:154.3px;top:505.2px;font-size:6.2px;line-height:6.2px;color:#1a1a1a;font-weight:bold;">正交</span>
<span class="t" style="left:171.3px;top:505.2px;font-size:6.2px;line-height:6.2px;color:#1a1a1a;font-weight:bold;">极轴</span>
<div style="left:187px;top:502.6px;width:28.2px;height:10.6px;background:#fdfdfd;border:1px solid #5c6068;"></div>
<span class="t" style="left:188.7px;top:505.2px;font-size:6.2px;line-height:6.2px;color:#1a1a1a;font-weight:bold;">对象捕捉</span>
<div style="left:217.4px;top:502.6px;width:28.2px;height:10.6px;background:#fdfdfd;border:1px solid #5c6068;"></div>
<span class="t" style="left:219.1px;top:505.2px;font-size:6.2px;line-height:6.2px;color:#1a1a1a;font-weight:bold;">对象追踪</span>
<span class="t" style="left:248.25px;top:505.6px;font-size:5.4px;line-height:5.4px;color:#1a1a1a;font-family:'Liberation Mono',monospace;font-weight:bold;">DUCS</span>
<div style="left:263.9px;top:502.6px;width:12.1px;height:10.6px;background:#fdfdfd;border:1px solid #5c6068;"></div>
<span class="t" style="left:265.07px;top:505.6px;font-size:5.4px;line-height:5.4px;color:#1a1a1a;font-family:'Liberation Mono',monospace;font-weight:bold;">DYN</span>
<span class="t" style="left:278.95px;top:505.2px;font-size:6.2px;line-height:6.2px;color:#1a1a1a;font-weight:bold;">线宽</span>
<span class="t" style="left:490.4px;top:505.6px;font-size:6.1px;line-height:6.1px;color:#1a1a1a;font-weight:bold;">注释比例:</span>
<span class="t" style="left:523.8px;top:504.8px;font-size:7.2px;line-height:7.2px;color:#1a1a1a;font-family:'Liberation Serif',serif;">1:1</span>
<svg style="left:534.6px;top:507.4px" width="4.6" height="3" viewBox="0 0 4.6 3"><path d="M0 0 H4.6 L2.3 2.8Z" fill="#111"/></svg>
<svg style="left:545px;top:503px" width="24" height="10" viewBox="0 0 24 10"><path d="M1 8.6 L3.4 3.4 L7.4 3 L6 8.6Z" fill="#5a8ad0" stroke="#2a4a8a" stroke-width="0.4"/><circle cx="6.4" cy="2.6" r="1.8" fill="#f4e04a"/><path d="M14.6 8.8 L16.8 3.4 L21 2 L19.4 8.4Z" fill="#b8bcc6" stroke="#7a7e88" stroke-width="0.4"/><path d="M15 8.6 L21.4 1.4" stroke="#8a8e98" stroke-width="0.7"/></svg>
<div style="left:571.6px;top:502.4px;width:12.6px;height:11.4px;background:#fdfdfd;border:1px solid #5c6068;"></div>
<svg style="left:573.4px;top:503.4px" width="9" height="9.4" viewBox="0 0 9 9.4"><path d="M5 4.4 V2.6 a1.8 1.8 0 0 1 3.4 -0.6" fill="none" stroke="#8a7a1a" stroke-width="1.1"/><rect x="0.8" y="4.2" width="5.8" height="4.6" rx="0.6" fill="#e4c81c" stroke="#6a5a0a" stroke-width="0.6"/><rect x="3" y="5.6" width="1.4" height="2" fill="#4a3a00"/></svg>
<svg style="left:587.6px;top:508px" width="4.4" height="3" viewBox="0 0 4.4 3"><path d="M0 0 H4.4 L2.2 2.8Z" fill="#111"/></svg>
<div style="left:595.4px;top:503.2px;width:9px;height:8.8px;background:linear-gradient(135deg,#c9dcf4,#8fb2e0);border:1.4px solid #3a6ab4;"></div>
<svg style="left:605.6px;top:506.6px" width="7" height="7" viewBox="0 0 7 7"><g fill="#aab0bc"><rect x="5" y="0.6" width="1.1" height="1.1"/><rect x="5" y="2.8" width="1.1" height="1.1"/><rect x="2.8" y="2.8" width="1.1" height="1.1"/><rect x="5" y="5" width="1.1" height="1.1"/><rect x="2.8" y="5" width="1.1" height="1.1"/><rect x="0.6" y="5" width="1.1" height="1.1"/></g></svg>
</div>
</body></html>
